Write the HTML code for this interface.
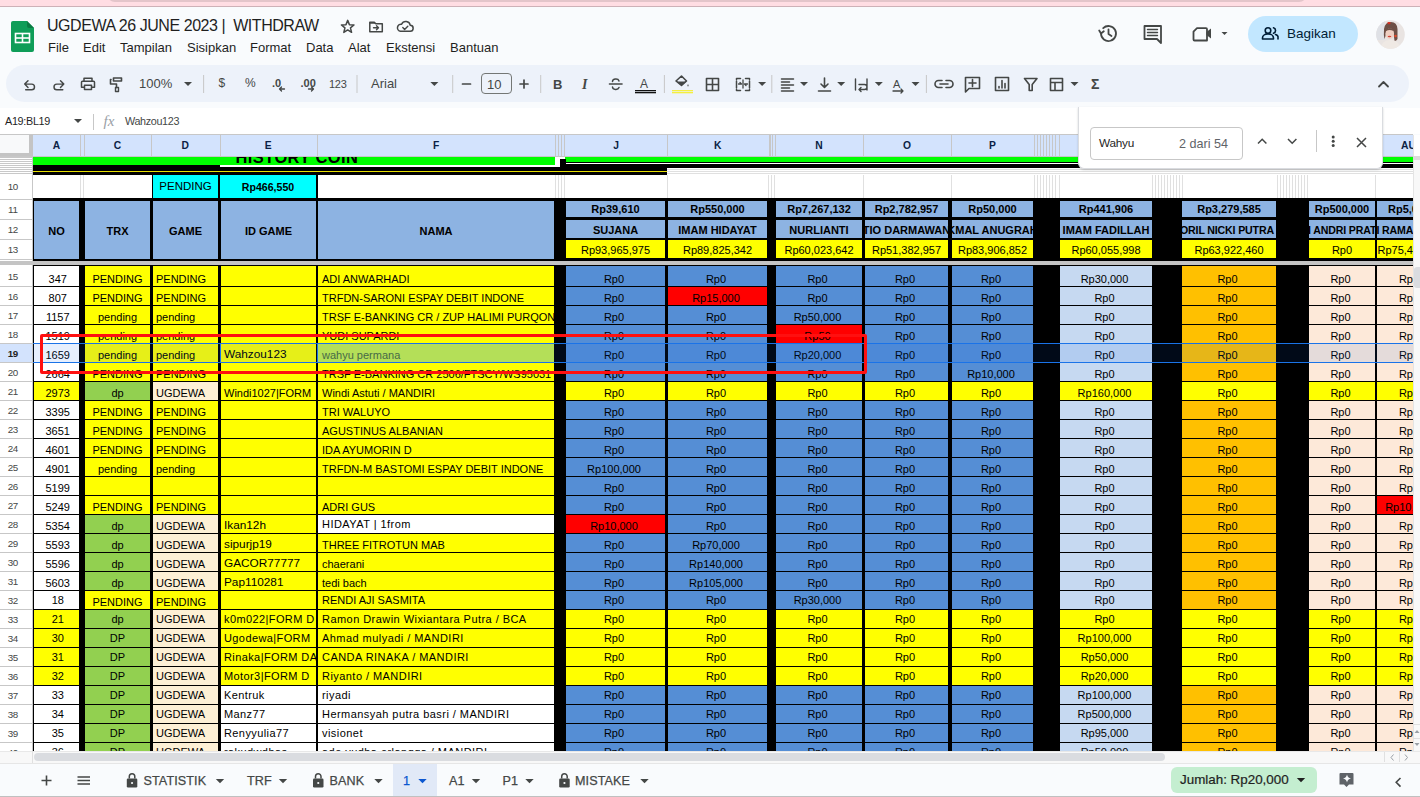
<!DOCTYPE html><html><head><meta charset="utf-8"><style>
*{box-sizing:border-box;margin:0;padding:0}
html,body{width:1420px;height:797px;overflow:hidden;background:#f9fbfd;font-family:"Liberation Sans",sans-serif;position:relative}
.a{position:absolute}
.t{position:absolute;white-space:nowrap;line-height:1}
</style></head><body>
<div class="a" style="left:0;top:0;width:1420px;height:6px;background:#ffdde3"></div>
<div class="a" style="left:107px;top:-8px;width:1200px;height:10px;background:#e3c5ca;border-radius:0 0 8px 8px"></div>
<div class="a" style="left:0;top:6px;width:1420px;height:1px;background:#cdb1b7"></div>
<svg class="a" style="left:11px;top:21px" width="23" height="31" viewBox="0 0 23 31">
<path d="M2 0 H16 L23 7 V29 a2 2 0 0 1 -2 2 H2 a2 2 0 0 1 -2 -2 V2 a2 2 0 0 1 2 -2z" fill="#0f9d58"/>
<path d="M16 0 L23 7 H18 a2 2 0 0 1 -2 -2z" fill="#0b7a43"/>
<rect x="4.5" y="12.5" width="14" height="9" fill="none" stroke="#fff" stroke-width="1.6"/>
<line x1="4.5" y1="17" x2="18.5" y2="17" stroke="#fff" stroke-width="1.6"/>
<line x1="11.5" y1="12.5" x2="11.5" y2="21.5" stroke="#fff" stroke-width="1.6"/>
</svg>
<div class="t" style="left:47px;top:18px;font-size:16px;color:#1f1f1f;letter-spacing:-0.45px">UGDEWA 26 JUNE 2023 |&nbsp; WITHDRAW</div>
<div class="t" style="left:48px;top:41px;font-size:13px;color:#1f1f1f">File</div>
<div class="t" style="left:83px;top:41px;font-size:13px;color:#1f1f1f">Edit</div>
<div class="t" style="left:120px;top:41px;font-size:13px;color:#1f1f1f">Tampilan</div>
<div class="t" style="left:187px;top:41px;font-size:13px;color:#1f1f1f">Sisipkan</div>
<div class="t" style="left:250px;top:41px;font-size:13px;color:#1f1f1f">Format</div>
<div class="t" style="left:306px;top:41px;font-size:13px;color:#1f1f1f">Data</div>
<div class="t" style="left:348px;top:41px;font-size:13px;color:#1f1f1f">Alat</div>
<div class="t" style="left:386px;top:41px;font-size:13px;color:#1f1f1f">Ekstensi</div>
<div class="t" style="left:450px;top:41px;font-size:13px;color:#1f1f1f">Bantuan</div>
<div class="a" style="left:6px;top:65px;width:1403px;height:37px;background:#edf2fa;border-radius:19px"></div>
<div class="a" style="left:0;top:108px;width:1420px;height:26px;background:#fff"></div>
<div class="t" style="left:5px;top:115.5px;font-size:10.8px;letter-spacing:-0.3px;color:#1f1f1f">A19:BL19</div>
<div class="a" style="left:93px;top:114px;width:1px;height:16px;background:#c7c7c7"></div>
<div class="t" style="left:125px;top:115.5px;font-size:10.8px;letter-spacing:-0.35px;color:#444746">Wahzou123</div>
<div class="t" style="left:139px;top:77px;font-size:13px;color:#444746">100%</div>
<div class="t" style="left:329px;top:79px;font-size:11px;color:#444746;letter-spacing:-0.3px">123</div>
<div class="t" style="left:371px;top:77px;font-size:13px;color:#444746">Arial</div>
<div class="a" style="left:481px;top:73px;width:31px;height:21px;border:1px solid #747775;border-radius:4px"></div>
<div class="t" style="left:487px;top:78px;font-size:13px;color:#444746">10</div>
<div class="t" style="left:218.5px;top:77px;font-size:12px;color:#444746">$</div>
<div class="t" style="left:245px;top:77px;font-size:12px;color:#444746">%</div>
<div class="a" style="left:1248px;top:16px;width:110px;height:36px;background:#c2e7ff;border-radius:18px"></div>
<div class="t" style="left:1287px;top:27px;font-size:13.5px;color:#001d35">Bagikan</div>
<svg class="a" style="left:1376px;top:19.5px" width="29" height="29" viewBox="0 0 29 29"><defs><clipPath id="av"><circle cx="14.5" cy="14.5" r="14.3"/></clipPath></defs>
<g clip-path="url(#av)"><rect width="29" height="29" fill="#e9e4e2"/><rect x="0" y="0" width="9" height="20" fill="#dfe1e6"/>
<path d="M8 9 q1 -7 7 -7 q6 0 6.5 7 v10 q-1 2 -3 2 l-1 -8 q-2 -4 -6 -3 q-2 1 -2 6 l-1 3 q-1 -4 -0.5 -10z" fill="#6d4f45"/>
<ellipse cx="13.8" cy="13.5" rx="4.2" ry="5.3" fill="#efcfc2"/><path d="M10 9.5 q4 -3 7.5 0 v1.5 q-4 -2 -7.5 0z" fill="#6d4f45"/>
<ellipse cx="13.5" cy="16.5" rx="1.8" ry="0.8" fill="#d0443a"/>
<path d="M11 3 q2 -2 4 0 l-2 1.5z" fill="#d92a1c"/><circle cx="19.5" cy="16" r="1.3" fill="#e24a2a"/>
<path d="M4 29 q2 -9 10 -9 q9 0 11 9z" fill="#efe9e4"/></g></svg>
<svg class="a" style="left:0;top:0" width="1420" height="797"><polygon points="347.70,20.40 349.40,24.65 353.98,24.96 350.46,27.90 351.58,32.34 347.70,29.90 343.82,32.34 344.94,27.90 341.42,24.96 346.00,24.65" fill="none" stroke="#444746" stroke-width="1.5" stroke-linejoin="round"/><path d="M369.8 22.3 h4.5 l1.5 1.5 h6.5 v8 h-12.5z" fill="none" stroke="#444746" stroke-width="1.5" stroke-linecap="round" stroke-linejoin="round"/><path d="M369.8 22.3 h4.5 l1.5 1.5 h-6z" fill="#444746"/><path d="M373.5 27.8 h5 M376.5 25.8 l2 2 l-2 2" fill="none" stroke="#444746" stroke-width="1.4" stroke-linecap="round" stroke-linejoin="round"/><path d="M400.5 31.3 h9.5 a3 3 0 0 0 0.3 -6 a4.6 4.6 0 0 0 -8.7 -1.1 a3.5 3.5 0 0 0 -1.1 7.1z" fill="none" stroke="#444746" stroke-width="1.5" stroke-linecap="round" stroke-linejoin="round"/><path d="M402.8 27.6 l1.8 1.8 l3.2 -3.2" fill="none" stroke="#444746" stroke-width="1.4" stroke-linecap="round" stroke-linejoin="round"/><path d="M1101 33.5 a7.5 7.5 0 1 0 2.2 -5.3" fill="none" stroke="#444746" stroke-width="1.8" stroke-linecap="round" stroke-linejoin="round"/><path d="M1099.2 30.5 l1.8 3 l2.8 -2.2" fill="none" stroke="#444746" stroke-width="1.8" stroke-linecap="round" stroke-linejoin="round"/><path d="M1108.5 29.5 v4.5 l3 2" fill="none" stroke="#444746" stroke-width="1.8" stroke-linecap="round" stroke-linejoin="round"/><path d="M1144.5 26 h16.5 v17 l-4 -4 h-12.5z" fill="none" stroke="#444746" stroke-width="1.8" stroke-linecap="round" stroke-linejoin="round"/><path d="M1147.5 29.5 h10 M1147.5 32.5 h10 M1147.5 35.5 h10" fill="none" stroke="#444746" stroke-width="1.4" stroke-linecap="round" stroke-linejoin="round"/><path d="M1197 28.2 h9 a1 1 0 0 1 1 1 v11.3 h-12.5 a1 1 0 0 1 -1 -1 v-7.8z" fill="none" stroke="#444746" stroke-width="1.8" stroke-linecap="round" stroke-linejoin="round"/><path d="M1206.5 32 l4.5 -3.5 v10 l-4.5 -3.5z" fill="#444746"/><path d="M1221.5 32 h6 l-3 3z" fill="#444746"/><circle cx="1268" cy="30.5" r="2.8" fill="none" stroke="#001d35" stroke-width="1.6"/><path d="M1262.5 39 v-1 a4 3 0 0 1 11 0 v1z" fill="none" stroke="#001d35" stroke-width="1.6" stroke-linecap="round" stroke-linejoin="round"/><path d="M1273.5 27.8 a2.8 2.8 0 0 1 0 5.4 M1275.5 34.5 a3.5 3 0 0 1 2.5 3.5 v1" fill="none" stroke="#001d35" stroke-width="1.6" stroke-linecap="round" stroke-linejoin="round"/><path d="M28 80.8 l-3.3 3.3 l3.3 3.3 M24.7 84.1 h7 a2.8 2.8 0 0 1 0 5.6 h-6" fill="none" stroke="#444746" stroke-width="1.45" stroke-linecap="round" stroke-linejoin="round"/><path d="M60.5 80.8 l3.3 3.3 l-3.3 3.3 M63.8 84.1 h-7 a2.8 2.8 0 0 0 0 5.6 h6" fill="none" stroke="#444746" stroke-width="1.45" stroke-linecap="round" stroke-linejoin="round"/><path d="M84 81 v-2.8 h8 v2.8 M82.5 81.3 h11 a1 1 0 0 1 1 1 v5 h-2.8 M83.8 87.3 h-2.3 v-5 a1 1 0 0 1 1 -1" fill="none" stroke="#444746" stroke-width="1.5" stroke-linecap="round" stroke-linejoin="round"/><path d="M84.5 85.3 h7 v4.3 h-7z" fill="none" stroke="#444746" stroke-width="1.5" stroke-linecap="round" stroke-linejoin="round"/><path d="M113.5 78 h8 v3 h-8z M111 79.5 h-0.5 v4.5 h6 v3.5" fill="none" stroke="#444746" stroke-width="1.6" stroke-linecap="round" stroke-linejoin="round"/><path d="M115.5 87.5 h3 v4 h-3z" fill="none" stroke="#444746" stroke-width="1.4" stroke-linecap="round" stroke-linejoin="round"/><path d="M184 82 h8 l-4 4z" fill="#444746"/><path d="M430.4 82 h8 l-4 4z" fill="#444746"/><path d="M758.1 82 h8 l-4 4z" fill="#444746"/><path d="M800 82 h8 l-4 4z" fill="#444746"/><path d="M837.2 82 h8 l-4 4z" fill="#444746"/><path d="M874.8 82 h8 l-4 4z" fill="#444746"/><path d="M911.5 82 h8 l-4 4z" fill="#444746"/><path d="M1070.5 82 h8 l-4 4z" fill="#444746"/><rect x="203.1" y="75" width="1" height="18" fill="#c7c7c7"/><rect x="356.5" y="75" width="1" height="18" fill="#c7c7c7"/><rect x="452.2" y="75" width="1" height="18" fill="#c7c7c7"/><rect x="540.2" y="75" width="1" height="18" fill="#c7c7c7"/><rect x="663.9" y="75" width="1" height="18" fill="#c7c7c7"/><rect x="771.3" y="75" width="1" height="18" fill="#c7c7c7"/><rect x="925.9" y="75" width="1" height="18" fill="#c7c7c7"/><text x="272" y="86.5" font-size="11" font-family="Liberation Sans" fill="#444746" font-weight="bold">.0</text><path d="M284.5 89 h-5 M281.5 87 l-2 2 l2 2" fill="none" stroke="#444746" stroke-width="1.3" stroke-linecap="round" stroke-linejoin="round"/><text x="300.5" y="86.5" font-size="11" font-family="Liberation Sans" fill="#444746" font-weight="bold">.00</text><path d="M308.5 89 h5 M311.5 87 l2 2 l-2 2" fill="none" stroke="#444746" stroke-width="1.3" stroke-linecap="round" stroke-linejoin="round"/><path d="M462.5 84 h8" fill="none" stroke="#444746" stroke-width="1.7" stroke-linecap="round" stroke-linejoin="round"/><path d="M520 84 h8 M524 80 v8" fill="none" stroke="#444746" stroke-width="1.7" stroke-linecap="round" stroke-linejoin="round"/><text x="553" y="89" font-size="13" font-family="Liberation Sans" font-weight="bold" fill="#444746">B</text><text x="582" y="89" font-size="14" font-family="Liberation Serif" font-style="italic" font-weight="bold" fill="#444746">I</text><path d="M609.5 84 h12.5" fill="none" stroke="#444746" stroke-width="1.6" stroke-linecap="round" stroke-linejoin="round"/><path d="M612.5 81.5 a3.3 2.5 0 0 1 6.5 -0.5 M612.5 87 a3.3 2.5 0 0 0 6.5 0.5" fill="none" stroke="#444746" stroke-width="1.5" stroke-linecap="round" stroke-linejoin="round"/><text x="640" y="88" font-size="12" font-family="Liberation Sans" fill="#444746">A</text><rect x="635" y="90" width="21" height="1.3" fill="#111"/><rect x="635" y="92" width="21" height="1.3" fill="#111"/><path d="M676 81 l5.5 -5 l5 5 l-5 4.5z" fill="none" stroke="#444746" stroke-width="1.6" stroke-linecap="round" stroke-linejoin="round"/><path d="M676.5 81.5 h10 l-5 4z" fill="#444746"/><path d="M688 84 q1.3 1.6 0 2.8 q-1.3 -1.2 0 -2.8z" fill="#444746"/><rect x="672" y="90" width="21" height="1.3" fill="#f5ef40"/><rect x="672" y="92" width="21" height="1.3" fill="#f5ef40"/><path d="M706.5 78.5 h12 v12 h-12z M712.5 78.5 v12 M706.5 84.5 h12" fill="none" stroke="#444746" stroke-width="1.6" stroke-linecap="round" stroke-linejoin="round"/><path d="M736.5 79.5 v-1 h4 M736.5 89.5 v1 h4 M749.5 79.5 v-1 h-4 M749.5 89.5 v1 h-4 M736.5 81 v7 M749.5 81 v7" fill="none" stroke="#444746" stroke-width="1.5" stroke-linecap="round" stroke-linejoin="round"/><path d="M738.5 84 h3 l-1.5 -1.5 M747.5 84 h-3 l1.5 1.5 M743 80 v8" fill="none" stroke="#444746" stroke-width="1.3" stroke-linecap="round" stroke-linejoin="round"/><path d="M781.5 79 h12 M781.5 82 h8 M781.5 85 h12 M781.5 88 h8 M781.5 91 h12" fill="none" stroke="#444746" stroke-width="1.5" stroke-linecap="round" stroke-linejoin="round"/><path d="M824.5 78 v9 M821 84 l3.5 3.5 l3.5 -3.5 M818.5 91 h12" fill="none" stroke="#444746" stroke-width="1.6" stroke-linecap="round" stroke-linejoin="round"/><path d="M855.5 79 v11 M867 79 v11 M859 84.5 h5.5 a2.5 2.5 0 0 1 0 5 h-5 M861 87.5 l-2 2 l2 2" fill="none" stroke="#444746" stroke-width="1.4" stroke-linecap="round" stroke-linejoin="round"/><text x="893" y="88" font-size="11" font-family="Liberation Sans" fill="#444746">A</text><path d="M893 91 h10 M901 89 l2 2 l-2 2" fill="none" stroke="#444746" stroke-width="1.3" stroke-linecap="round" stroke-linejoin="round"/><path d="M942 80.5 h-3.5 a3.5 3.5 0 0 0 0 7 h3.5 M946 80.5 h3.5 a3.5 3.5 0 0 1 0 7 h-3.5 M940 84 h8" fill="none" stroke="#444746" stroke-width="1.6" stroke-linecap="round" stroke-linejoin="round"/><path d="M965.5 77.5 h14 v11 h-10.5 l-3.5 3.5z M972.5 79.5 v7 M969 83 h7" fill="none" stroke="#444746" stroke-width="1.6" stroke-linecap="round" stroke-linejoin="round"/><path d="M995.5 77.5 h13 v13 h-13z M999 86.5 v1.5 M1002 80.5 v7.5 M1005 83.5 v4.5" fill="none" stroke="#444746" stroke-width="1.6" stroke-linecap="round" stroke-linejoin="round"/><path d="M1024.5 78.5 h12.5 l-4.8 6 v6 h-3 v-6z" fill="none" stroke="#444746" stroke-width="1.6" stroke-linecap="round" stroke-linejoin="round"/><path d="M1050.5 78.5 h12 v12 h-12z M1050.5 82.5 h12 M1055 82.5 v8" fill="none" stroke="#444746" stroke-width="1.6" stroke-linecap="round" stroke-linejoin="round"/><text x="1091" y="89" font-size="14" font-family="Liberation Sans" fill="#444746" font-weight="bold">&#931;</text><path d="M1379 86.5 l4.5 -4.5 l4.5 4.5" fill="none" stroke="#444746" stroke-width="1.8" stroke-linecap="round" stroke-linejoin="round"/><path d="M74 119 h8 l-4 4z" fill="#444746"/><text x="103.5" y="126" font-size="15" font-family="Liberation Serif" font-style="italic" fill="#9aa0a6">fx</text></svg>
<div class="a" style="left:0;top:0;width:1413px;height:751px;overflow:hidden">
<div class="a" style="left:0;top:134px;width:1420px;height:1px;background:#c7c7c7"></div>
<div class="a" style="left:0;top:135px;width:1420px;height:616px;background:#fff"></div>
<div class="a" style="left:33px;top:135px;width:1387px;height:21.5px;background:#d3e3fd"></div>
<div class="a" style="left:0;top:135px;width:29px;height:18px;background:#f8f9fa"></div>
<div class="a" style="left:29px;top:135px;width:4px;height:21.5px;background:#c4c4c4"></div>
<div class="a" style="left:0;top:153px;width:33px;height:3.5px;background:#c4c4c4"></div>
<div class="a" style="left:0;top:156px;width:1420px;height:1px;background:#c7c7c7"></div>
<div class="a" style="left:33px;top:134.5px;width:47px;height:21px;display:flex;align-items:center;justify-content:center;font-size:10.3px;font-weight:bold;color:#0b1f45">A</div>
<div class="a" style="left:84px;top:134.5px;width:67px;height:21px;display:flex;align-items:center;justify-content:center;font-size:10.3px;font-weight:bold;color:#0b1f45">C</div>
<div class="a" style="left:151px;top:134.5px;width:68.5px;height:21px;display:flex;align-items:center;justify-content:center;font-size:10.3px;font-weight:bold;color:#0b1f45">D</div>
<div class="a" style="left:219.5px;top:134.5px;width:97.5px;height:21px;display:flex;align-items:center;justify-content:center;font-size:10.3px;font-weight:bold;color:#0b1f45">E</div>
<div class="a" style="left:317px;top:134.5px;width:238.5px;height:21px;display:flex;align-items:center;justify-content:center;font-size:10.3px;font-weight:bold;color:#0b1f45">F</div>
<div class="a" style="left:565px;top:134.5px;width:102px;height:21px;display:flex;align-items:center;justify-content:center;font-size:10.3px;font-weight:bold;color:#0b1f45">J</div>
<div class="a" style="left:667px;top:134.5px;width:101.5px;height:21px;display:flex;align-items:center;justify-content:center;font-size:10.3px;font-weight:bold;color:#0b1f45">K</div>
<div class="a" style="left:774.5px;top:134.5px;width:88.89999999999998px;height:21px;display:flex;align-items:center;justify-content:center;font-size:10.3px;font-weight:bold;color:#0b1f45">N</div>
<div class="a" style="left:863.4px;top:134.5px;width:87.30000000000007px;height:21px;display:flex;align-items:center;justify-content:center;font-size:10.3px;font-weight:bold;color:#0b1f45">O</div>
<div class="a" style="left:950.7px;top:134.5px;width:83.70000000000005px;height:21px;display:flex;align-items:center;justify-content:center;font-size:10.3px;font-weight:bold;color:#0b1f45">P</div>
<div class="a" style="left:1059px;top:134.5px;width:93px;height:21px;display:flex;align-items:center;justify-content:center;font-size:10.3px;font-weight:bold;color:#0b1f45"></div>
<div class="a" style="left:1182px;top:134.5px;width:94px;height:21px;display:flex;align-items:center;justify-content:center;font-size:10.3px;font-weight:bold;color:#0b1f45"></div>
<div class="a" style="left:1308px;top:134.5px;width:67px;height:21px;display:flex;align-items:center;justify-content:center;font-size:10.3px;font-weight:bold;color:#0b1f45"></div>
<div class="a" style="left:1377px;top:134.5px;width:63px;height:21px;display:flex;align-items:center;justify-content:center;font-size:10.3px;font-weight:bold;color:#0b1f45">AU</div>
<div class="a" style="left:80px;top:135px;width:1px;height:21px;background:#c7c7c7"></div>
<div class="a" style="left:84px;top:135px;width:1px;height:21px;background:#c7c7c7"></div>
<div class="a" style="left:151px;top:135px;width:1px;height:21px;background:#c7c7c7"></div>
<div class="a" style="left:219.5px;top:135px;width:1px;height:21px;background:#c7c7c7"></div>
<div class="a" style="left:317px;top:135px;width:1px;height:21px;background:#c7c7c7"></div>
<div class="a" style="left:555px;top:135px;width:1px;height:21px;background:#c7c7c7"></div>
<div class="a" style="left:558px;top:135px;width:1px;height:21px;background:#c7c7c7"></div>
<div class="a" style="left:561px;top:135px;width:1px;height:21px;background:#c7c7c7"></div>
<div class="a" style="left:564px;top:135px;width:1px;height:21px;background:#c7c7c7"></div>
<div class="a" style="left:667px;top:135px;width:1px;height:21px;background:#c7c7c7"></div>
<div class="a" style="left:768.5px;top:135px;width:1px;height:21px;background:#c7c7c7"></div>
<div class="a" style="left:770px;top:135px;width:1px;height:21px;background:#c7c7c7"></div>
<div class="a" style="left:772px;top:135px;width:1px;height:21px;background:#c7c7c7"></div>
<div class="a" style="left:774.5px;top:135px;width:1px;height:21px;background:#c7c7c7"></div>
<div class="a" style="left:863.4px;top:135px;width:1px;height:21px;background:#c7c7c7"></div>
<div class="a" style="left:950.7px;top:135px;width:1px;height:21px;background:#c7c7c7"></div>
<div class="a" style="left:1034px;top:135px;width:1px;height:21px;background:#c7c7c7"></div>
<div class="a" style="left:1037px;top:135px;width:1px;height:21px;background:#c7c7c7"></div>
<div class="a" style="left:1040px;top:135px;width:1px;height:21px;background:#c7c7c7"></div>
<div class="a" style="left:1043px;top:135px;width:1px;height:21px;background:#c7c7c7"></div>
<div class="a" style="left:1046px;top:135px;width:1px;height:21px;background:#c7c7c7"></div>
<div class="a" style="left:1049px;top:135px;width:1px;height:21px;background:#c7c7c7"></div>
<div class="a" style="left:1052px;top:135px;width:1px;height:21px;background:#c7c7c7"></div>
<div class="a" style="left:1055px;top:135px;width:1px;height:21px;background:#c7c7c7"></div>
<div class="a" style="left:1059px;top:135px;width:1px;height:21px;background:#c7c7c7"></div>
<div class="a" style="left:1152px;top:135px;width:1px;height:21px;background:#c7c7c7"></div>
<div class="a" style="left:1155px;top:135px;width:1px;height:21px;background:#c7c7c7"></div>
<div class="a" style="left:1158px;top:135px;width:1px;height:21px;background:#c7c7c7"></div>
<div class="a" style="left:1161px;top:135px;width:1px;height:21px;background:#c7c7c7"></div>
<div class="a" style="left:1164px;top:135px;width:1px;height:21px;background:#c7c7c7"></div>
<div class="a" style="left:1167px;top:135px;width:1px;height:21px;background:#c7c7c7"></div>
<div class="a" style="left:1170px;top:135px;width:1px;height:21px;background:#c7c7c7"></div>
<div class="a" style="left:1173px;top:135px;width:1px;height:21px;background:#c7c7c7"></div>
<div class="a" style="left:1176px;top:135px;width:1px;height:21px;background:#c7c7c7"></div>
<div class="a" style="left:1179px;top:135px;width:1px;height:21px;background:#c7c7c7"></div>
<div class="a" style="left:1182px;top:135px;width:1px;height:21px;background:#c7c7c7"></div>
<div class="a" style="left:1276px;top:135px;width:1px;height:21px;background:#c7c7c7"></div>
<div class="a" style="left:1279px;top:135px;width:1px;height:21px;background:#c7c7c7"></div>
<div class="a" style="left:1282px;top:135px;width:1px;height:21px;background:#c7c7c7"></div>
<div class="a" style="left:1285px;top:135px;width:1px;height:21px;background:#c7c7c7"></div>
<div class="a" style="left:1288px;top:135px;width:1px;height:21px;background:#c7c7c7"></div>
<div class="a" style="left:1291px;top:135px;width:1px;height:21px;background:#c7c7c7"></div>
<div class="a" style="left:1294px;top:135px;width:1px;height:21px;background:#c7c7c7"></div>
<div class="a" style="left:1297px;top:135px;width:1px;height:21px;background:#c7c7c7"></div>
<div class="a" style="left:1300px;top:135px;width:1px;height:21px;background:#c7c7c7"></div>
<div class="a" style="left:1303px;top:135px;width:1px;height:21px;background:#c7c7c7"></div>
<div class="a" style="left:1306px;top:135px;width:1px;height:21px;background:#c7c7c7"></div>
<div class="a" style="left:1308px;top:135px;width:1px;height:21px;background:#c7c7c7"></div>
<div class="a" style="left:1375px;top:135px;width:1px;height:21px;background:#c7c7c7"></div>
<div class="a" style="left:32px;top:156px;width:1px;height:595px;background:#c7c7c7"></div>
<div class="a" style="left:0;top:157px;width:32px;height:1px;background:#c8c8c8"></div>
<div class="a" style="left:0;top:159px;width:32px;height:1px;background:#c8c8c8"></div>
<div class="a" style="left:0;top:161px;width:32px;height:1px;background:#c8c8c8"></div>
<div class="a" style="left:0;top:163px;width:32px;height:1px;background:#c8c8c8"></div>
<div class="a" style="left:0;top:165px;width:32px;height:1px;background:#c8c8c8"></div>
<div class="a" style="left:0;top:167px;width:32px;height:1px;background:#c8c8c8"></div>
<div class="a" style="left:0;top:169px;width:32px;height:1px;background:#c8c8c8"></div>
<div class="a" style="left:0;top:171px;width:32px;height:1px;background:#c8c8c8"></div>
<div class="a" style="left:0;top:173px;width:32px;height:1px;background:#c8c8c8"></div>
<div class="a" style="left:0;top:174px;width:32px;height:25.5px;background:transparent;border-bottom:1px solid #c7c7c7"></div>
<div class="a" style="left:0;top:174px;width:25.6px;height:25.5px;display:flex;align-items:center;justify-content:center;font-size:9.8px;letter-spacing:-0.4px;font-weight:normal;color:#444746">10</div>
<div class="a" style="left:0;top:199.5px;width:32px;height:20.0px;background:transparent;border-bottom:1px solid #c7c7c7"></div>
<div class="a" style="left:0;top:199.5px;width:25.6px;height:20.0px;display:flex;align-items:center;justify-content:center;font-size:9.8px;letter-spacing:-0.4px;font-weight:normal;color:#444746">11</div>
<div class="a" style="left:0;top:219.5px;width:32px;height:20.0px;background:transparent;border-bottom:1px solid #c7c7c7"></div>
<div class="a" style="left:0;top:219.5px;width:25.6px;height:20.0px;display:flex;align-items:center;justify-content:center;font-size:9.8px;letter-spacing:-0.4px;font-weight:normal;color:#444746">12</div>
<div class="a" style="left:0;top:239.5px;width:32px;height:20.0px;background:transparent;border-bottom:1px solid #c7c7c7"></div>
<div class="a" style="left:0;top:239.5px;width:25.6px;height:20.0px;display:flex;align-items:center;justify-content:center;font-size:9.8px;letter-spacing:-0.4px;font-weight:normal;color:#444746">13</div>
<div class="a" style="left:0;top:266px;width:32px;height:21px;background:transparent;border-bottom:1px solid #c7c7c7"></div>
<div class="a" style="left:0;top:266px;width:25.6px;height:21px;display:flex;align-items:center;justify-content:center;font-size:9.8px;letter-spacing:-0.4px;font-weight:normal;color:#444746">15</div>
<div class="a" style="left:0;top:287px;width:32px;height:19px;background:transparent;border-bottom:1px solid #c7c7c7"></div>
<div class="a" style="left:0;top:287px;width:25.6px;height:19px;display:flex;align-items:center;justify-content:center;font-size:9.8px;letter-spacing:-0.4px;font-weight:normal;color:#444746">16</div>
<div class="a" style="left:0;top:306px;width:32px;height:19px;background:transparent;border-bottom:1px solid #c7c7c7"></div>
<div class="a" style="left:0;top:306px;width:25.6px;height:19px;display:flex;align-items:center;justify-content:center;font-size:9.8px;letter-spacing:-0.4px;font-weight:normal;color:#444746">17</div>
<div class="a" style="left:0;top:325px;width:32px;height:19px;background:transparent;border-bottom:1px solid #c7c7c7"></div>
<div class="a" style="left:0;top:325px;width:25.6px;height:19px;display:flex;align-items:center;justify-content:center;font-size:9.8px;letter-spacing:-0.4px;font-weight:normal;color:#444746">18</div>
<div class="a" style="left:0;top:344px;width:32px;height:19px;background:#d3e3fd;border-bottom:1px solid #c7c7c7"></div>
<div class="a" style="left:0;top:344px;width:25.6px;height:19px;display:flex;align-items:center;justify-content:center;font-size:9.8px;letter-spacing:-0.4px;font-weight:bold;color:#1f1f1f">19</div>
<div class="a" style="left:0;top:363px;width:32px;height:19px;background:transparent;border-bottom:1px solid #c7c7c7"></div>
<div class="a" style="left:0;top:363px;width:25.6px;height:19px;display:flex;align-items:center;justify-content:center;font-size:9.8px;letter-spacing:-0.4px;font-weight:normal;color:#444746">20</div>
<div class="a" style="left:0;top:382px;width:32px;height:19px;background:transparent;border-bottom:1px solid #c7c7c7"></div>
<div class="a" style="left:0;top:382px;width:25.6px;height:19px;display:flex;align-items:center;justify-content:center;font-size:9.8px;letter-spacing:-0.4px;font-weight:normal;color:#444746">21</div>
<div class="a" style="left:0;top:401px;width:32px;height:19px;background:transparent;border-bottom:1px solid #c7c7c7"></div>
<div class="a" style="left:0;top:401px;width:25.6px;height:19px;display:flex;align-items:center;justify-content:center;font-size:9.8px;letter-spacing:-0.4px;font-weight:normal;color:#444746">22</div>
<div class="a" style="left:0;top:420px;width:32px;height:19px;background:transparent;border-bottom:1px solid #c7c7c7"></div>
<div class="a" style="left:0;top:420px;width:25.6px;height:19px;display:flex;align-items:center;justify-content:center;font-size:9.8px;letter-spacing:-0.4px;font-weight:normal;color:#444746">23</div>
<div class="a" style="left:0;top:439px;width:32px;height:19px;background:transparent;border-bottom:1px solid #c7c7c7"></div>
<div class="a" style="left:0;top:439px;width:25.6px;height:19px;display:flex;align-items:center;justify-content:center;font-size:9.8px;letter-spacing:-0.4px;font-weight:normal;color:#444746">24</div>
<div class="a" style="left:0;top:458px;width:32px;height:19px;background:transparent;border-bottom:1px solid #c7c7c7"></div>
<div class="a" style="left:0;top:458px;width:25.6px;height:19px;display:flex;align-items:center;justify-content:center;font-size:9.8px;letter-spacing:-0.4px;font-weight:normal;color:#444746">25</div>
<div class="a" style="left:0;top:477px;width:32px;height:19px;background:transparent;border-bottom:1px solid #c7c7c7"></div>
<div class="a" style="left:0;top:477px;width:25.6px;height:19px;display:flex;align-items:center;justify-content:center;font-size:9.8px;letter-spacing:-0.4px;font-weight:normal;color:#444746">26</div>
<div class="a" style="left:0;top:496px;width:32px;height:19px;background:transparent;border-bottom:1px solid #c7c7c7"></div>
<div class="a" style="left:0;top:496px;width:25.6px;height:19px;display:flex;align-items:center;justify-content:center;font-size:9.8px;letter-spacing:-0.4px;font-weight:normal;color:#444746">27</div>
<div class="a" style="left:0;top:515px;width:32px;height:19px;background:transparent;border-bottom:1px solid #c7c7c7"></div>
<div class="a" style="left:0;top:515px;width:25.6px;height:19px;display:flex;align-items:center;justify-content:center;font-size:9.8px;letter-spacing:-0.4px;font-weight:normal;color:#444746">28</div>
<div class="a" style="left:0;top:534px;width:32px;height:19px;background:transparent;border-bottom:1px solid #c7c7c7"></div>
<div class="a" style="left:0;top:534px;width:25.6px;height:19px;display:flex;align-items:center;justify-content:center;font-size:9.8px;letter-spacing:-0.4px;font-weight:normal;color:#444746">29</div>
<div class="a" style="left:0;top:553px;width:32px;height:19px;background:transparent;border-bottom:1px solid #c7c7c7"></div>
<div class="a" style="left:0;top:553px;width:25.6px;height:19px;display:flex;align-items:center;justify-content:center;font-size:9.8px;letter-spacing:-0.4px;font-weight:normal;color:#444746">30</div>
<div class="a" style="left:0;top:572px;width:32px;height:19px;background:transparent;border-bottom:1px solid #c7c7c7"></div>
<div class="a" style="left:0;top:572px;width:25.6px;height:19px;display:flex;align-items:center;justify-content:center;font-size:9.8px;letter-spacing:-0.4px;font-weight:normal;color:#444746">31</div>
<div class="a" style="left:0;top:591px;width:32px;height:19px;background:transparent;border-bottom:1px solid #c7c7c7"></div>
<div class="a" style="left:0;top:591px;width:25.6px;height:19px;display:flex;align-items:center;justify-content:center;font-size:9.8px;letter-spacing:-0.4px;font-weight:normal;color:#444746">32</div>
<div class="a" style="left:0;top:610px;width:32px;height:19px;background:transparent;border-bottom:1px solid #c7c7c7"></div>
<div class="a" style="left:0;top:610px;width:25.6px;height:19px;display:flex;align-items:center;justify-content:center;font-size:9.8px;letter-spacing:-0.4px;font-weight:normal;color:#444746">33</div>
<div class="a" style="left:0;top:629px;width:32px;height:19px;background:transparent;border-bottom:1px solid #c7c7c7"></div>
<div class="a" style="left:0;top:629px;width:25.6px;height:19px;display:flex;align-items:center;justify-content:center;font-size:9.8px;letter-spacing:-0.4px;font-weight:normal;color:#444746">34</div>
<div class="a" style="left:0;top:648px;width:32px;height:19px;background:transparent;border-bottom:1px solid #c7c7c7"></div>
<div class="a" style="left:0;top:648px;width:25.6px;height:19px;display:flex;align-items:center;justify-content:center;font-size:9.8px;letter-spacing:-0.4px;font-weight:normal;color:#444746">35</div>
<div class="a" style="left:0;top:667px;width:32px;height:19px;background:transparent;border-bottom:1px solid #c7c7c7"></div>
<div class="a" style="left:0;top:667px;width:25.6px;height:19px;display:flex;align-items:center;justify-content:center;font-size:9.8px;letter-spacing:-0.4px;font-weight:normal;color:#444746">36</div>
<div class="a" style="left:0;top:686px;width:32px;height:19px;background:transparent;border-bottom:1px solid #c7c7c7"></div>
<div class="a" style="left:0;top:686px;width:25.6px;height:19px;display:flex;align-items:center;justify-content:center;font-size:9.8px;letter-spacing:-0.4px;font-weight:normal;color:#444746">37</div>
<div class="a" style="left:0;top:705px;width:32px;height:19px;background:transparent;border-bottom:1px solid #c7c7c7"></div>
<div class="a" style="left:0;top:705px;width:25.6px;height:19px;display:flex;align-items:center;justify-content:center;font-size:9.8px;letter-spacing:-0.4px;font-weight:normal;color:#444746">38</div>
<div class="a" style="left:0;top:724px;width:32px;height:19px;background:transparent;border-bottom:1px solid #c7c7c7"></div>
<div class="a" style="left:0;top:724px;width:25.6px;height:19px;display:flex;align-items:center;justify-content:center;font-size:9.8px;letter-spacing:-0.4px;font-weight:normal;color:#444746">39</div>
<div class="a" style="left:0;top:743px;width:32px;height:19px;background:transparent;border-bottom:1px solid #c7c7c7"></div>
<div class="a" style="left:0;top:743px;width:25.6px;height:19px;display:flex;align-items:center;justify-content:center;font-size:9.8px;letter-spacing:-0.4px;font-weight:normal;color:#444746">40</div>
<div class="a" style="left:33px;top:156.5px;width:522px;height:8.5px;background:#00ff00;overflow:hidden"><div class="t" style="left:202.5px;top:-8px;font-size:16.5px;font-weight:bold;color:#000;letter-spacing:0.4px">HISTORY COIN</div></div>
<div class="a" style="left:33px;top:165px;width:522px;height:10px;background:#000"></div>
<div class="a" style="left:220px;top:165px;width:335px;height:1.5px;background:#fff"></div>
<div class="a" style="left:33px;top:171px;width:522px;height:1px;background:#e8e000"></div>
<div class="a" style="left:565px;top:157px;width:848px;height:5px;background:#00ff00"></div>
<div class="a" style="left:555px;top:157px;width:5px;height:10px;background:#fff"></div>
<div class="a" style="left:560px;top:159px;width:6px;height:16px;background:#000"></div>
<div class="a" style="left:565px;top:162px;width:848px;height:1px;background:#000"></div>
<div class="a" style="left:565px;top:164px;width:848px;height:4px;background:#000"></div>
<div class="a" style="left:555px;top:167px;width:112px;height:8px;background:#000"></div>
<div class="a" style="left:555px;top:171px;width:112px;height:1px;background:#e8e000"></div>
<div class="a" style="left:667px;top:169px;width:746px;height:1px;background:#e0e0e0"></div>
<div class="a" style="left:667px;top:171px;width:746px;height:1px;background:#e0e0e0"></div>
<div class="a" style="left:667px;top:173px;width:746px;height:1px;background:#e0e0e0"></div>
<div class="a" style="left:153px;top:175px;width:65px;height:23px;background:#00ffff;overflow:hidden;display:flex;align-items:flex-end;justify-content:center;padding-bottom:5.5px;"><span style="font-size:11.5px;line-height:1;white-space:nowrap;color:#000;">PENDING</span></div>
<div class="a" style="left:220px;top:175px;width:96px;height:23px;background:#00ffff;overflow:hidden;display:flex;align-items:flex-end;justify-content:center;padding-bottom:5.5px;"><span style="font-size:10.6px;line-height:1;white-space:nowrap;color:#000;font-weight:bold;">Rp466,550</span></div>
<div class="a" style="left:218px;top:175px;width:2px;height:23px;background:#000"></div>
<div class="a" style="left:316px;top:175px;width:2px;height:23px;background:#000"></div>
<div class="a" style="left:152px;top:175px;width:1px;height:23px;background:#000"></div>
<div class="a" style="left:80px;top:175px;width:1px;height:23px;background:#e0e0e0"></div>
<div class="a" style="left:83px;top:175px;width:1px;height:23px;background:#e0e0e0"></div>
<div class="a" style="left:555px;top:175px;width:1px;height:23px;background:#e0e0e0"></div>
<div class="a" style="left:558px;top:175px;width:1px;height:23px;background:#e0e0e0"></div>
<div class="a" style="left:561px;top:175px;width:1px;height:23px;background:#e0e0e0"></div>
<div class="a" style="left:564px;top:175px;width:1px;height:23px;background:#e0e0e0"></div>
<div class="a" style="left:667px;top:175px;width:1px;height:23px;background:#e0e0e0"></div>
<div class="a" style="left:768px;top:175px;width:1px;height:23px;background:#e0e0e0"></div>
<div class="a" style="left:771px;top:175px;width:1px;height:23px;background:#e0e0e0"></div>
<div class="a" style="left:774px;top:175px;width:1px;height:23px;background:#e0e0e0"></div>
<div class="a" style="left:863px;top:175px;width:1px;height:23px;background:#e0e0e0"></div>
<div class="a" style="left:951px;top:175px;width:1px;height:23px;background:#e0e0e0"></div>
<div class="a" style="left:1034px;top:175px;width:1px;height:23px;background:#e0e0e0"></div>
<div class="a" style="left:1037px;top:175px;width:1px;height:23px;background:#e0e0e0"></div>
<div class="a" style="left:1040px;top:175px;width:1px;height:23px;background:#e0e0e0"></div>
<div class="a" style="left:1043px;top:175px;width:1px;height:23px;background:#e0e0e0"></div>
<div class="a" style="left:1046px;top:175px;width:1px;height:23px;background:#e0e0e0"></div>
<div class="a" style="left:1049px;top:175px;width:1px;height:23px;background:#e0e0e0"></div>
<div class="a" style="left:1052px;top:175px;width:1px;height:23px;background:#e0e0e0"></div>
<div class="a" style="left:1055px;top:175px;width:1px;height:23px;background:#e0e0e0"></div>
<div class="a" style="left:1059px;top:175px;width:1px;height:23px;background:#e0e0e0"></div>
<div class="a" style="left:1152px;top:175px;width:1px;height:23px;background:#e0e0e0"></div>
<div class="a" style="left:1155px;top:175px;width:1px;height:23px;background:#e0e0e0"></div>
<div class="a" style="left:1158px;top:175px;width:1px;height:23px;background:#e0e0e0"></div>
<div class="a" style="left:1161px;top:175px;width:1px;height:23px;background:#e0e0e0"></div>
<div class="a" style="left:1164px;top:175px;width:1px;height:23px;background:#e0e0e0"></div>
<div class="a" style="left:1167px;top:175px;width:1px;height:23px;background:#e0e0e0"></div>
<div class="a" style="left:1170px;top:175px;width:1px;height:23px;background:#e0e0e0"></div>
<div class="a" style="left:1173px;top:175px;width:1px;height:23px;background:#e0e0e0"></div>
<div class="a" style="left:1176px;top:175px;width:1px;height:23px;background:#e0e0e0"></div>
<div class="a" style="left:1179px;top:175px;width:1px;height:23px;background:#e0e0e0"></div>
<div class="a" style="left:1182px;top:175px;width:1px;height:23px;background:#e0e0e0"></div>
<div class="a" style="left:1277px;top:175px;width:1px;height:23px;background:#e0e0e0"></div>
<div class="a" style="left:1280px;top:175px;width:1px;height:23px;background:#e0e0e0"></div>
<div class="a" style="left:1283px;top:175px;width:1px;height:23px;background:#e0e0e0"></div>
<div class="a" style="left:1286px;top:175px;width:1px;height:23px;background:#e0e0e0"></div>
<div class="a" style="left:1289px;top:175px;width:1px;height:23px;background:#e0e0e0"></div>
<div class="a" style="left:1292px;top:175px;width:1px;height:23px;background:#e0e0e0"></div>
<div class="a" style="left:1295px;top:175px;width:1px;height:23px;background:#e0e0e0"></div>
<div class="a" style="left:1298px;top:175px;width:1px;height:23px;background:#e0e0e0"></div>
<div class="a" style="left:1301px;top:175px;width:1px;height:23px;background:#e0e0e0"></div>
<div class="a" style="left:1304px;top:175px;width:1px;height:23px;background:#e0e0e0"></div>
<div class="a" style="left:1307px;top:175px;width:1px;height:23px;background:#e0e0e0"></div>
<div class="a" style="left:1375px;top:175px;width:1px;height:23px;background:#e0e0e0"></div>
<div class="a" style="left:33px;top:198px;width:1380px;height:62.5px;background:#000"></div>
<div class="a" style="left:0;top:260.5px;width:1413px;height:4.5px;background:#c4c4c4"></div>
<div class="a" style="left:34px;top:201px;width:45px;height:58px;background:#8db3e2;overflow:hidden;display:flex;align-items:flex-end;justify-content:center;padding-bottom:22px;"><span style="font-size:11px;line-height:1;white-space:nowrap;color:#000;font-weight:bold;">NO</span></div>
<div class="a" style="left:85px;top:201px;width:65px;height:58px;background:#8db3e2;overflow:hidden;display:flex;align-items:flex-end;justify-content:center;padding-bottom:22px;"><span style="font-size:11px;line-height:1;white-space:nowrap;color:#000;font-weight:bold;">TRX</span></div>
<div class="a" style="left:153px;top:201px;width:65px;height:58px;background:#8db3e2;overflow:hidden;display:flex;align-items:flex-end;justify-content:center;padding-bottom:22px;"><span style="font-size:11px;line-height:1;white-space:nowrap;color:#000;font-weight:bold;">GAME</span></div>
<div class="a" style="left:221px;top:201px;width:95px;height:58px;background:#8db3e2;overflow:hidden;display:flex;align-items:flex-end;justify-content:center;padding-bottom:22px;"><span style="font-size:11px;line-height:1;white-space:nowrap;color:#000;font-weight:bold;">ID GAME</span></div>
<div class="a" style="left:318px;top:201px;width:236px;height:58px;background:#8db3e2;overflow:hidden;display:flex;align-items:flex-end;justify-content:center;padding-bottom:22px;"><span style="font-size:11px;line-height:1;white-space:nowrap;color:#000;font-weight:bold;">NAMA</span></div>
<div class="a" style="left:566px;top:201px;width:99px;height:16px;background:#8db3e2;overflow:hidden;display:flex;align-items:flex-end;justify-content:center;padding-bottom:2px;"><span style="font-size:11px;line-height:1;white-space:nowrap;color:#000;font-weight:bold;">Rp39,610</span></div>
<div class="a" style="left:566px;top:220px;width:99px;height:18px;background:#8db3e2;overflow:hidden;display:flex;align-items:flex-end;justify-content:center;padding-bottom:2.5px;"><span style="font-size:11px;line-height:1;white-space:nowrap;color:#000;font-weight:bold;">SUJANA</span></div>
<div class="a" style="left:566px;top:240px;width:99px;height:18px;background:#ffff00;overflow:hidden;display:flex;align-items:flex-end;justify-content:center;padding-bottom:2.5px;"><span style="font-size:11px;line-height:1;white-space:nowrap;color:#000;">Rp93,965,975</span></div>
<div class="a" style="left:668px;top:201px;width:99px;height:16px;background:#8db3e2;overflow:hidden;display:flex;align-items:flex-end;justify-content:center;padding-bottom:2px;"><span style="font-size:11px;line-height:1;white-space:nowrap;color:#000;font-weight:bold;">Rp550,000</span></div>
<div class="a" style="left:668px;top:220px;width:99px;height:18px;background:#8db3e2;overflow:hidden;display:flex;align-items:flex-end;justify-content:center;padding-bottom:2.5px;"><span style="font-size:11px;line-height:1;white-space:nowrap;color:#000;font-weight:bold;">IMAM HIDAYAT</span></div>
<div class="a" style="left:668px;top:240px;width:99px;height:18px;background:#ffff00;overflow:hidden;display:flex;align-items:flex-end;justify-content:center;padding-bottom:2.5px;"><span style="font-size:11px;line-height:1;white-space:nowrap;color:#000;">Rp89,825,342</span></div>
<div class="a" style="left:776px;top:201px;width:86px;height:16px;background:#8db3e2;overflow:hidden;display:flex;align-items:flex-end;justify-content:center;padding-bottom:2px;"><span style="font-size:11px;line-height:1;white-space:nowrap;color:#000;font-weight:bold;">Rp7,267,132</span></div>
<div class="a" style="left:776px;top:220px;width:86px;height:18px;background:#8db3e2;overflow:hidden;display:flex;align-items:flex-end;justify-content:center;padding-bottom:2.5px;"><span style="font-size:11px;line-height:1;white-space:nowrap;color:#000;font-weight:bold;">NURLIANTI</span></div>
<div class="a" style="left:776px;top:240px;width:86px;height:18px;background:#ffff00;overflow:hidden;display:flex;align-items:flex-end;justify-content:center;padding-bottom:2.5px;"><span style="font-size:11px;line-height:1;white-space:nowrap;color:#000;">Rp60,023,642</span></div>
<div class="a" style="left:865px;top:201px;width:83px;height:16px;background:#8db3e2;overflow:hidden;display:flex;align-items:flex-end;justify-content:center;padding-bottom:2px;"><span style="font-size:11px;line-height:1;white-space:nowrap;color:#000;font-weight:bold;">Rp2,782,957</span></div>
<div class="a" style="left:865px;top:220px;width:83px;height:18px;background:#8db3e2;overflow:hidden;display:flex;align-items:flex-end;justify-content:center;padding-bottom:2.5px;"><span style="font-size:11px;line-height:1;white-space:nowrap;color:#000;font-weight:bold;">TIO DARMAWAN</span></div>
<div class="a" style="left:865px;top:240px;width:83px;height:18px;background:#ffff00;overflow:hidden;display:flex;align-items:flex-end;justify-content:center;padding-bottom:2.5px;"><span style="font-size:11px;line-height:1;white-space:nowrap;color:#000;">Rp51,382,957</span></div>
<div class="a" style="left:952px;top:201px;width:81px;height:16px;background:#8db3e2;overflow:hidden;display:flex;align-items:flex-end;justify-content:center;padding-bottom:2px;"><span style="font-size:11px;line-height:1;white-space:nowrap;color:#000;font-weight:bold;">Rp50,000</span></div>
<div class="a" style="left:952px;top:220px;width:81px;height:18px;background:#8db3e2;overflow:hidden;display:flex;align-items:flex-end;justify-content:center;padding-bottom:2.5px;"><span style="font-size:11px;line-height:1;white-space:nowrap;color:#000;font-weight:bold;">KMAL ANUGRAH</span></div>
<div class="a" style="left:952px;top:240px;width:81px;height:18px;background:#ffff00;overflow:hidden;display:flex;align-items:flex-end;justify-content:center;padding-bottom:2.5px;"><span style="font-size:11px;line-height:1;white-space:nowrap;color:#000;">Rp83,906,852</span></div>
<div class="a" style="left:1060px;top:201px;width:92px;height:16px;background:#8db3e2;overflow:hidden;display:flex;align-items:flex-end;justify-content:center;padding-bottom:2px;"><span style="font-size:11px;line-height:1;white-space:nowrap;color:#000;font-weight:bold;">Rp441,906</span></div>
<div class="a" style="left:1060px;top:220px;width:92px;height:18px;background:#8db3e2;overflow:hidden;display:flex;align-items:flex-end;justify-content:center;padding-bottom:2.5px;"><span style="font-size:11px;line-height:1;white-space:nowrap;color:#000;font-weight:bold;">IMAM FADILLAH</span></div>
<div class="a" style="left:1060px;top:240px;width:92px;height:18px;background:#ffff00;overflow:hidden;display:flex;align-items:flex-end;justify-content:center;padding-bottom:2.5px;"><span style="font-size:11px;line-height:1;white-space:nowrap;color:#000;">Rp60,055,998</span></div>
<div class="a" style="left:1182px;top:201px;width:94px;height:16px;background:#8db3e2;overflow:hidden;display:flex;align-items:flex-end;justify-content:center;padding-bottom:2px;"><span style="font-size:11px;line-height:1;white-space:nowrap;color:#000;font-weight:bold;">Rp3,279,585</span></div>
<div class="a" style="left:1182px;top:220px;width:94px;height:18px;background:#8db3e2;overflow:hidden"><div class="t" style="left:-9.5px;bottom:2.5px;font-size:10.6px;font-weight:bold;letter-spacing:-0.15px;color:#000">BORIL NICKI PUTRA</div></div>
<div class="a" style="left:1182px;top:240px;width:94px;height:18px;background:#ffff00;overflow:hidden;display:flex;align-items:flex-end;justify-content:center;padding-bottom:2.5px;"><span style="font-size:11px;line-height:1;white-space:nowrap;color:#000;">Rp63,922,460</span></div>
<div class="a" style="left:1309px;top:201px;width:66px;height:16px;background:#8db3e2;overflow:hidden;display:flex;align-items:flex-end;justify-content:center;padding-bottom:2px;"><span style="font-size:11px;line-height:1;white-space:nowrap;color:#000;font-weight:bold;">Rp500,000</span></div>
<div class="a" style="left:1309px;top:220px;width:66px;height:18px;background:#8db3e2;overflow:hidden"><div class="t" style="left:-8.5px;bottom:2.5px;font-size:10.6px;font-weight:bold;letter-spacing:-0.15px;color:#000">RI ANDRI PRATAMA</div></div>
<div class="a" style="left:1309px;top:240px;width:66px;height:18px;background:#ffff00;overflow:hidden;display:flex;align-items:flex-end;justify-content:center;padding-bottom:2.5px;"><span style="font-size:11px;line-height:1;white-space:nowrap;color:#000;">Rp0</span></div>
<div class="a" style="left:1377px;top:201px;width:67px;height:16px;background:#8db3e2;overflow:hidden"><div class="t" style="left:11px;bottom:2px;font-size:11px;font-weight:bold;letter-spacing:0px;color:#000">Rp5,000</div></div>
<div class="a" style="left:1377px;top:220px;width:67px;height:18px;background:#8db3e2;overflow:hidden"><div class="t" style="left:-8px;bottom:2.5px;font-size:10.6px;font-weight:bold;letter-spacing:-0.15px;color:#000">RI RAMADHAN</div></div>
<div class="a" style="left:1377px;top:240px;width:67px;height:18px;background:#ffff00;overflow:hidden"><div class="t" style="left:0.5px;bottom:2.5px;font-size:11px;letter-spacing:0px;color:#000">Rp75,450,000</div></div>
<div class="a" style="left:33px;top:265px;width:1380px;height:486px;background:#000"></div>
<div class="a" style="left:34px;top:266px;width:45px;height:20px;background:#ffffff;overflow:hidden;display:flex;align-items:flex-end;justify-content:center;padding-bottom:1.5px;padding-left:2.5px;"><span style="font-size:11px;line-height:1;white-space:nowrap;color:#000;">347</span></div>
<div class="a" style="left:85px;top:266px;width:65px;height:20px;background:#ffff00;overflow:hidden;display:flex;align-items:flex-end;justify-content:center;padding-bottom:1.5px;"><span style="font-size:11px;line-height:1;white-space:nowrap;color:#000;">PENDING</span></div>
<div class="a" style="left:153px;top:266px;width:65px;height:20px;background:#ffff00;overflow:hidden;display:flex;align-items:flex-end;justify-content:flex-start;padding-left:3px;padding-bottom:1.5px;"><span style="font-size:11px;line-height:1;white-space:nowrap;color:#000;">PENDING</span></div>
<div class="a" style="left:221px;top:266px;width:95px;height:20px;background:#ffff00;overflow:hidden;display:flex;align-items:flex-end;justify-content:flex-start;padding-left:3px;padding-bottom:1.5px;"></div>
<div class="a" style="left:318px;top:266px;width:236px;height:20px;background:#ffff00;overflow:hidden;display:flex;align-items:flex-end;justify-content:flex-start;padding-left:4px;padding-bottom:1.5px;"><span style="font-size:11px;line-height:1;white-space:nowrap;color:#000;">ADI ANWARHADI</span></div>
<div class="a" style="left:566px;top:266px;width:99px;height:20px;background:#558ed5;overflow:hidden;display:flex;align-items:flex-end;justify-content:center;padding-bottom:1.5px;padding-right:3px;"><span style="font-size:11px;line-height:1;white-space:nowrap;color:#000;">Rp0</span></div>
<div class="a" style="left:668px;top:266px;width:99px;height:20px;background:#558ed5;overflow:hidden;display:flex;align-items:flex-end;justify-content:center;padding-bottom:1.5px;padding-right:3px;"><span style="font-size:11px;line-height:1;white-space:nowrap;color:#000;">Rp0</span></div>
<div class="a" style="left:776px;top:266px;width:86px;height:20px;background:#558ed5;overflow:hidden;display:flex;align-items:flex-end;justify-content:center;padding-bottom:1.5px;padding-right:3px;"><span style="font-size:11px;line-height:1;white-space:nowrap;color:#000;">Rp0</span></div>
<div class="a" style="left:865px;top:266px;width:83px;height:20px;background:#558ed5;overflow:hidden;display:flex;align-items:flex-end;justify-content:center;padding-bottom:1.5px;padding-right:3px;"><span style="font-size:11px;line-height:1;white-space:nowrap;color:#000;">Rp0</span></div>
<div class="a" style="left:952px;top:266px;width:81px;height:20px;background:#558ed5;overflow:hidden;display:flex;align-items:flex-end;justify-content:center;padding-bottom:1.5px;padding-right:3px;"><span style="font-size:11px;line-height:1;white-space:nowrap;color:#000;">Rp0</span></div>
<div class="a" style="left:1060px;top:266px;width:92px;height:20px;background:#c6d9f1;overflow:hidden;display:flex;align-items:flex-end;justify-content:center;padding-bottom:1.5px;padding-right:3px;"><span style="font-size:11px;line-height:1;white-space:nowrap;color:#000;">Rp30,000</span></div>
<div class="a" style="left:1182px;top:266px;width:94px;height:20px;background:#ffc000;overflow:hidden;display:flex;align-items:flex-end;justify-content:center;padding-bottom:1.5px;padding-right:3px;"><span style="font-size:11px;line-height:1;white-space:nowrap;color:#000;">Rp0</span></div>
<div class="a" style="left:1309px;top:266px;width:66px;height:20px;background:#fde9d9;overflow:hidden;display:flex;align-items:flex-end;justify-content:center;padding-bottom:1.5px;padding-right:3px;"><span style="font-size:11px;line-height:1;white-space:nowrap;color:#000;">Rp0</span></div>
<div class="a" style="left:1377px;top:266px;width:67px;height:20px;background:#fde9d9;overflow:hidden;display:flex;align-items:flex-end;justify-content:center;padding-bottom:1.5px;padding-right:3px;"><span style="font-size:11px;line-height:1;white-space:nowrap;color:#000;">Rp0</span></div>
<div class="a" style="left:34px;top:287px;width:45px;height:18px;background:#ffffff;overflow:hidden;display:flex;align-items:flex-end;justify-content:center;padding-bottom:1.5px;padding-left:2.5px;"><span style="font-size:11px;line-height:1;white-space:nowrap;color:#000;">807</span></div>
<div class="a" style="left:85px;top:287px;width:65px;height:18px;background:#ffff00;overflow:hidden;display:flex;align-items:flex-end;justify-content:center;padding-bottom:1.5px;"><span style="font-size:11px;line-height:1;white-space:nowrap;color:#000;">PENDING</span></div>
<div class="a" style="left:153px;top:287px;width:65px;height:18px;background:#ffff00;overflow:hidden;display:flex;align-items:flex-end;justify-content:flex-start;padding-left:3px;padding-bottom:1.5px;"><span style="font-size:11px;line-height:1;white-space:nowrap;color:#000;">PENDING</span></div>
<div class="a" style="left:221px;top:287px;width:95px;height:18px;background:#ffff00;overflow:hidden;display:flex;align-items:flex-end;justify-content:flex-start;padding-left:3px;padding-bottom:1.5px;"></div>
<div class="a" style="left:318px;top:287px;width:236px;height:18px;background:#ffff00;overflow:hidden;display:flex;align-items:flex-end;justify-content:flex-start;padding-left:4px;padding-bottom:1.5px;"><span style="font-size:11px;line-height:1;white-space:nowrap;color:#000;">TRFDN-SARONI ESPAY DEBIT INDONE</span></div>
<div class="a" style="left:566px;top:287px;width:99px;height:18px;background:#558ed5;overflow:hidden;display:flex;align-items:flex-end;justify-content:center;padding-bottom:1.5px;padding-right:3px;"><span style="font-size:11px;line-height:1;white-space:nowrap;color:#000;">Rp0</span></div>
<div class="a" style="left:668px;top:287px;width:99px;height:18px;background:#ff0000;overflow:hidden;display:flex;align-items:flex-end;justify-content:center;padding-bottom:1.5px;padding-right:3px;"><span style="font-size:11px;line-height:1;white-space:nowrap;color:#000;">Rp15,000</span></div>
<div class="a" style="left:776px;top:287px;width:86px;height:18px;background:#558ed5;overflow:hidden;display:flex;align-items:flex-end;justify-content:center;padding-bottom:1.5px;padding-right:3px;"><span style="font-size:11px;line-height:1;white-space:nowrap;color:#000;">Rp0</span></div>
<div class="a" style="left:865px;top:287px;width:83px;height:18px;background:#558ed5;overflow:hidden;display:flex;align-items:flex-end;justify-content:center;padding-bottom:1.5px;padding-right:3px;"><span style="font-size:11px;line-height:1;white-space:nowrap;color:#000;">Rp0</span></div>
<div class="a" style="left:952px;top:287px;width:81px;height:18px;background:#558ed5;overflow:hidden;display:flex;align-items:flex-end;justify-content:center;padding-bottom:1.5px;padding-right:3px;"><span style="font-size:11px;line-height:1;white-space:nowrap;color:#000;">Rp0</span></div>
<div class="a" style="left:1060px;top:287px;width:92px;height:18px;background:#c6d9f1;overflow:hidden;display:flex;align-items:flex-end;justify-content:center;padding-bottom:1.5px;padding-right:3px;"><span style="font-size:11px;line-height:1;white-space:nowrap;color:#000;">Rp0</span></div>
<div class="a" style="left:1182px;top:287px;width:94px;height:18px;background:#ffc000;overflow:hidden;display:flex;align-items:flex-end;justify-content:center;padding-bottom:1.5px;padding-right:3px;"><span style="font-size:11px;line-height:1;white-space:nowrap;color:#000;">Rp0</span></div>
<div class="a" style="left:1309px;top:287px;width:66px;height:18px;background:#fde9d9;overflow:hidden;display:flex;align-items:flex-end;justify-content:center;padding-bottom:1.5px;padding-right:3px;"><span style="font-size:11px;line-height:1;white-space:nowrap;color:#000;">Rp0</span></div>
<div class="a" style="left:1377px;top:287px;width:67px;height:18px;background:#fde9d9;overflow:hidden;display:flex;align-items:flex-end;justify-content:center;padding-bottom:1.5px;padding-right:3px;"><span style="font-size:11px;line-height:1;white-space:nowrap;color:#000;">Rp0</span></div>
<div class="a" style="left:34px;top:306px;width:45px;height:18px;background:#ffffff;overflow:hidden;display:flex;align-items:flex-end;justify-content:center;padding-bottom:1.5px;padding-left:2.5px;"><span style="font-size:11px;line-height:1;white-space:nowrap;color:#000;">1157</span></div>
<div class="a" style="left:85px;top:306px;width:65px;height:18px;background:#ffff00;overflow:hidden;display:flex;align-items:flex-end;justify-content:center;padding-bottom:1.5px;"><span style="font-size:11px;line-height:1;white-space:nowrap;color:#000;">pending</span></div>
<div class="a" style="left:153px;top:306px;width:65px;height:18px;background:#ffff00;overflow:hidden;display:flex;align-items:flex-end;justify-content:flex-start;padding-left:3px;padding-bottom:1.5px;"><span style="font-size:11px;line-height:1;white-space:nowrap;color:#000;">pending</span></div>
<div class="a" style="left:221px;top:306px;width:95px;height:18px;background:#ffff00;overflow:hidden;display:flex;align-items:flex-end;justify-content:flex-start;padding-left:3px;padding-bottom:1.5px;"></div>
<div class="a" style="left:318px;top:306px;width:236px;height:18px;background:#ffff00;overflow:hidden;display:flex;align-items:flex-end;justify-content:flex-start;padding-left:4px;padding-bottom:1.5px;"><span style="font-size:11px;line-height:1;white-space:nowrap;color:#000;">TRSF E-BANKING CR / ZUP HALIMI PURQON</span></div>
<div class="a" style="left:566px;top:306px;width:99px;height:18px;background:#558ed5;overflow:hidden;display:flex;align-items:flex-end;justify-content:center;padding-bottom:1.5px;padding-right:3px;"><span style="font-size:11px;line-height:1;white-space:nowrap;color:#000;">Rp0</span></div>
<div class="a" style="left:668px;top:306px;width:99px;height:18px;background:#558ed5;overflow:hidden;display:flex;align-items:flex-end;justify-content:center;padding-bottom:1.5px;padding-right:3px;"><span style="font-size:11px;line-height:1;white-space:nowrap;color:#000;">Rp0</span></div>
<div class="a" style="left:776px;top:306px;width:86px;height:18px;background:#558ed5;overflow:hidden;display:flex;align-items:flex-end;justify-content:center;padding-bottom:1.5px;padding-right:3px;"><span style="font-size:11px;line-height:1;white-space:nowrap;color:#000;">Rp50,000</span></div>
<div class="a" style="left:865px;top:306px;width:83px;height:18px;background:#558ed5;overflow:hidden;display:flex;align-items:flex-end;justify-content:center;padding-bottom:1.5px;padding-right:3px;"><span style="font-size:11px;line-height:1;white-space:nowrap;color:#000;">Rp0</span></div>
<div class="a" style="left:952px;top:306px;width:81px;height:18px;background:#558ed5;overflow:hidden;display:flex;align-items:flex-end;justify-content:center;padding-bottom:1.5px;padding-right:3px;"><span style="font-size:11px;line-height:1;white-space:nowrap;color:#000;">Rp0</span></div>
<div class="a" style="left:1060px;top:306px;width:92px;height:18px;background:#c6d9f1;overflow:hidden;display:flex;align-items:flex-end;justify-content:center;padding-bottom:1.5px;padding-right:3px;"><span style="font-size:11px;line-height:1;white-space:nowrap;color:#000;">Rp0</span></div>
<div class="a" style="left:1182px;top:306px;width:94px;height:18px;background:#ffc000;overflow:hidden;display:flex;align-items:flex-end;justify-content:center;padding-bottom:1.5px;padding-right:3px;"><span style="font-size:11px;line-height:1;white-space:nowrap;color:#000;">Rp0</span></div>
<div class="a" style="left:1309px;top:306px;width:66px;height:18px;background:#fde9d9;overflow:hidden;display:flex;align-items:flex-end;justify-content:center;padding-bottom:1.5px;padding-right:3px;"><span style="font-size:11px;line-height:1;white-space:nowrap;color:#000;">Rp0</span></div>
<div class="a" style="left:1377px;top:306px;width:67px;height:18px;background:#fde9d9;overflow:hidden;display:flex;align-items:flex-end;justify-content:center;padding-bottom:1.5px;padding-right:3px;"><span style="font-size:11px;line-height:1;white-space:nowrap;color:#000;">Rp0</span></div>
<div class="a" style="left:34px;top:325px;width:45px;height:18px;background:#ffffff;overflow:hidden;display:flex;align-items:flex-end;justify-content:center;padding-bottom:1.5px;padding-left:2.5px;"><span style="font-size:11px;line-height:1;white-space:nowrap;color:#000;">1519</span></div>
<div class="a" style="left:85px;top:325px;width:65px;height:18px;background:#ffff00;overflow:hidden;display:flex;align-items:flex-end;justify-content:center;padding-bottom:1.5px;"><span style="font-size:11px;line-height:1;white-space:nowrap;color:#000;">pending</span></div>
<div class="a" style="left:153px;top:325px;width:65px;height:18px;background:#ffff00;overflow:hidden;display:flex;align-items:flex-end;justify-content:flex-start;padding-left:3px;padding-bottom:1.5px;"><span style="font-size:11px;line-height:1;white-space:nowrap;color:#000;">pending</span></div>
<div class="a" style="left:221px;top:325px;width:95px;height:18px;background:#ffff00;overflow:hidden;display:flex;align-items:flex-end;justify-content:flex-start;padding-left:3px;padding-bottom:1.5px;"></div>
<div class="a" style="left:318px;top:325px;width:236px;height:18px;background:#ffff00;overflow:hidden;display:flex;align-items:flex-end;justify-content:flex-start;padding-left:4px;padding-bottom:1.5px;"><span style="font-size:11px;line-height:1;white-space:nowrap;color:#000;">YUDI SUPARDI</span></div>
<div class="a" style="left:566px;top:325px;width:99px;height:18px;background:#558ed5;overflow:hidden;display:flex;align-items:flex-end;justify-content:center;padding-bottom:1.5px;padding-right:3px;"><span style="font-size:11px;line-height:1;white-space:nowrap;color:#000;">Rp0</span></div>
<div class="a" style="left:668px;top:325px;width:99px;height:18px;background:#558ed5;overflow:hidden;display:flex;align-items:flex-end;justify-content:center;padding-bottom:1.5px;padding-right:3px;"><span style="font-size:11px;line-height:1;white-space:nowrap;color:#000;">Rp0</span></div>
<div class="a" style="left:776px;top:325px;width:86px;height:18px;background:#ff0000;overflow:hidden;display:flex;align-items:flex-end;justify-content:center;padding-bottom:1.5px;padding-right:3px;"><span style="font-size:11px;line-height:1;white-space:nowrap;color:#000;">Rp50</span></div>
<div class="a" style="left:865px;top:325px;width:83px;height:18px;background:#558ed5;overflow:hidden;display:flex;align-items:flex-end;justify-content:center;padding-bottom:1.5px;padding-right:3px;"><span style="font-size:11px;line-height:1;white-space:nowrap;color:#000;">Rp0</span></div>
<div class="a" style="left:952px;top:325px;width:81px;height:18px;background:#558ed5;overflow:hidden;display:flex;align-items:flex-end;justify-content:center;padding-bottom:1.5px;padding-right:3px;"><span style="font-size:11px;line-height:1;white-space:nowrap;color:#000;">Rp0</span></div>
<div class="a" style="left:1060px;top:325px;width:92px;height:18px;background:#c6d9f1;overflow:hidden;display:flex;align-items:flex-end;justify-content:center;padding-bottom:1.5px;padding-right:3px;"><span style="font-size:11px;line-height:1;white-space:nowrap;color:#000;">Rp0</span></div>
<div class="a" style="left:1182px;top:325px;width:94px;height:18px;background:#ffc000;overflow:hidden;display:flex;align-items:flex-end;justify-content:center;padding-bottom:1.5px;padding-right:3px;"><span style="font-size:11px;line-height:1;white-space:nowrap;color:#000;">Rp0</span></div>
<div class="a" style="left:1309px;top:325px;width:66px;height:18px;background:#fde9d9;overflow:hidden;display:flex;align-items:flex-end;justify-content:center;padding-bottom:1.5px;padding-right:3px;"><span style="font-size:11px;line-height:1;white-space:nowrap;color:#000;">Rp0</span></div>
<div class="a" style="left:1377px;top:325px;width:67px;height:18px;background:#fde9d9;overflow:hidden;display:flex;align-items:flex-end;justify-content:center;padding-bottom:1.5px;padding-right:3px;"><span style="font-size:11px;line-height:1;white-space:nowrap;color:#000;">Rp0</span></div>
<div class="a" style="left:34px;top:344px;width:45px;height:18px;background:#ffffff;overflow:hidden;display:flex;align-items:flex-end;justify-content:center;padding-bottom:1.5px;padding-left:2.5px;"><span style="font-size:11px;line-height:1;white-space:nowrap;color:#000;">1659</span></div>
<div class="a" style="left:85px;top:344px;width:65px;height:18px;background:#ffff00;overflow:hidden;display:flex;align-items:flex-end;justify-content:center;padding-bottom:1.5px;"><span style="font-size:11px;line-height:1;white-space:nowrap;color:#000;">pending</span></div>
<div class="a" style="left:153px;top:344px;width:65px;height:18px;background:#ffff00;overflow:hidden;display:flex;align-items:flex-end;justify-content:flex-start;padding-left:3px;padding-bottom:1.5px;"><span style="font-size:11px;line-height:1;white-space:nowrap;color:#000;">pending</span></div>
<div class="a" style="left:221px;top:344px;width:95px;height:18px;background:#ffff00;overflow:hidden;display:flex;align-items:flex-end;justify-content:flex-start;padding-left:3px;padding-bottom:1.5px;"><span style="font-size:11.8px;line-height:1;white-space:nowrap;color:#000;">Wahzou123</span></div>
<div class="a" style="left:318px;top:344px;width:236px;height:18px;background:#c8ee48;overflow:hidden;display:flex;align-items:flex-end;justify-content:flex-start;padding-left:4px;padding-bottom:1.5px;"><span style="font-size:11px;line-height:1;white-space:nowrap;color:#4e6b34;">wahyu permana</span></div>
<div class="a" style="left:566px;top:344px;width:99px;height:18px;background:#558ed5;overflow:hidden;display:flex;align-items:flex-end;justify-content:center;padding-bottom:1.5px;padding-right:3px;"><span style="font-size:11px;line-height:1;white-space:nowrap;color:#000;">Rp0</span></div>
<div class="a" style="left:668px;top:344px;width:99px;height:18px;background:#558ed5;overflow:hidden;display:flex;align-items:flex-end;justify-content:center;padding-bottom:1.5px;padding-right:3px;"><span style="font-size:11px;line-height:1;white-space:nowrap;color:#000;">Rp0</span></div>
<div class="a" style="left:776px;top:344px;width:86px;height:18px;background:#558ed5;overflow:hidden;display:flex;align-items:flex-end;justify-content:center;padding-bottom:1.5px;padding-right:3px;"><span style="font-size:11px;line-height:1;white-space:nowrap;color:#000;">Rp20,000</span></div>
<div class="a" style="left:865px;top:344px;width:83px;height:18px;background:#558ed5;overflow:hidden;display:flex;align-items:flex-end;justify-content:center;padding-bottom:1.5px;padding-right:3px;"><span style="font-size:11px;line-height:1;white-space:nowrap;color:#000;">Rp0</span></div>
<div class="a" style="left:952px;top:344px;width:81px;height:18px;background:#558ed5;overflow:hidden;display:flex;align-items:flex-end;justify-content:center;padding-bottom:1.5px;padding-right:3px;"><span style="font-size:11px;line-height:1;white-space:nowrap;color:#000;">Rp0</span></div>
<div class="a" style="left:1060px;top:344px;width:92px;height:18px;background:#c6d9f1;overflow:hidden;display:flex;align-items:flex-end;justify-content:center;padding-bottom:1.5px;padding-right:3px;"><span style="font-size:11px;line-height:1;white-space:nowrap;color:#000;">Rp0</span></div>
<div class="a" style="left:1182px;top:344px;width:94px;height:18px;background:#ffc000;overflow:hidden;display:flex;align-items:flex-end;justify-content:center;padding-bottom:1.5px;padding-right:3px;"><span style="font-size:11px;line-height:1;white-space:nowrap;color:#000;">Rp0</span></div>
<div class="a" style="left:1309px;top:344px;width:66px;height:18px;background:#fde9d9;overflow:hidden;display:flex;align-items:flex-end;justify-content:center;padding-bottom:1.5px;padding-right:3px;"><span style="font-size:11px;line-height:1;white-space:nowrap;color:#000;">Rp0</span></div>
<div class="a" style="left:1377px;top:344px;width:67px;height:18px;background:#fde9d9;overflow:hidden;display:flex;align-items:flex-end;justify-content:center;padding-bottom:1.5px;padding-right:3px;"><span style="font-size:11px;line-height:1;white-space:nowrap;color:#000;">Rp0</span></div>
<div class="a" style="left:34px;top:363px;width:45px;height:18px;background:#ffffff;overflow:hidden;display:flex;align-items:flex-end;justify-content:center;padding-bottom:1.5px;padding-left:2.5px;"><span style="font-size:11px;line-height:1;white-space:nowrap;color:#000;">2664</span></div>
<div class="a" style="left:85px;top:363px;width:65px;height:18px;background:#ffff00;overflow:hidden;display:flex;align-items:flex-end;justify-content:center;padding-bottom:1.5px;"><span style="font-size:11px;line-height:1;white-space:nowrap;color:#000;">PENDING</span></div>
<div class="a" style="left:153px;top:363px;width:65px;height:18px;background:#ffff00;overflow:hidden;display:flex;align-items:flex-end;justify-content:flex-start;padding-left:3px;padding-bottom:1.5px;"><span style="font-size:11px;line-height:1;white-space:nowrap;color:#000;">PENDING</span></div>
<div class="a" style="left:221px;top:363px;width:95px;height:18px;background:#ffff00;overflow:hidden;display:flex;align-items:flex-end;justify-content:flex-start;padding-left:3px;padding-bottom:1.5px;"></div>
<div class="a" style="left:318px;top:363px;width:236px;height:18px;background:#ffff00;overflow:hidden;display:flex;align-items:flex-end;justify-content:flex-start;padding-left:4px;padding-bottom:1.5px;"><span style="font-size:11px;line-height:1;white-space:nowrap;color:#000;">TRSF E-BANKING CR 2506/FTSCY/WS95031</span></div>
<div class="a" style="left:566px;top:363px;width:99px;height:18px;background:#558ed5;overflow:hidden;display:flex;align-items:flex-end;justify-content:center;padding-bottom:1.5px;padding-right:3px;"><span style="font-size:11px;line-height:1;white-space:nowrap;color:#000;">Rp0</span></div>
<div class="a" style="left:668px;top:363px;width:99px;height:18px;background:#558ed5;overflow:hidden;display:flex;align-items:flex-end;justify-content:center;padding-bottom:1.5px;padding-right:3px;"><span style="font-size:11px;line-height:1;white-space:nowrap;color:#000;">Rp0</span></div>
<div class="a" style="left:776px;top:363px;width:86px;height:18px;background:#558ed5;overflow:hidden;display:flex;align-items:flex-end;justify-content:center;padding-bottom:1.5px;padding-right:3px;"><span style="font-size:11px;line-height:1;white-space:nowrap;color:#000;">Rp0</span></div>
<div class="a" style="left:865px;top:363px;width:83px;height:18px;background:#558ed5;overflow:hidden;display:flex;align-items:flex-end;justify-content:center;padding-bottom:1.5px;padding-right:3px;"><span style="font-size:11px;line-height:1;white-space:nowrap;color:#000;">Rp0</span></div>
<div class="a" style="left:952px;top:363px;width:81px;height:18px;background:#558ed5;overflow:hidden;display:flex;align-items:flex-end;justify-content:center;padding-bottom:1.5px;padding-right:3px;"><span style="font-size:11px;line-height:1;white-space:nowrap;color:#000;">Rp10,000</span></div>
<div class="a" style="left:1060px;top:363px;width:92px;height:18px;background:#c6d9f1;overflow:hidden;display:flex;align-items:flex-end;justify-content:center;padding-bottom:1.5px;padding-right:3px;"><span style="font-size:11px;line-height:1;white-space:nowrap;color:#000;">Rp0</span></div>
<div class="a" style="left:1182px;top:363px;width:94px;height:18px;background:#ffc000;overflow:hidden;display:flex;align-items:flex-end;justify-content:center;padding-bottom:1.5px;padding-right:3px;"><span style="font-size:11px;line-height:1;white-space:nowrap;color:#000;">Rp0</span></div>
<div class="a" style="left:1309px;top:363px;width:66px;height:18px;background:#fde9d9;overflow:hidden;display:flex;align-items:flex-end;justify-content:center;padding-bottom:1.5px;padding-right:3px;"><span style="font-size:11px;line-height:1;white-space:nowrap;color:#000;">Rp0</span></div>
<div class="a" style="left:1377px;top:363px;width:67px;height:18px;background:#fde9d9;overflow:hidden;display:flex;align-items:flex-end;justify-content:center;padding-bottom:1.5px;padding-right:3px;"><span style="font-size:11px;line-height:1;white-space:nowrap;color:#000;">Rp0</span></div>
<div class="a" style="left:34px;top:382px;width:45px;height:18px;background:#ffff00;overflow:hidden;display:flex;align-items:flex-end;justify-content:center;padding-bottom:1.5px;padding-left:2.5px;"><span style="font-size:11px;line-height:1;white-space:nowrap;color:#000;">2973</span></div>
<div class="a" style="left:85px;top:382px;width:65px;height:18px;background:#92d050;overflow:hidden;display:flex;align-items:flex-end;justify-content:center;padding-bottom:1.5px;"><span style="font-size:11px;line-height:1;white-space:nowrap;color:#000;">dp</span></div>
<div class="a" style="left:153px;top:382px;width:65px;height:18px;background:#fdf0d5;overflow:hidden;display:flex;align-items:flex-end;justify-content:flex-start;padding-left:3px;padding-bottom:1.5px;"><span style="font-size:11px;line-height:1;white-space:nowrap;color:#000;">UGDEWA</span></div>
<div class="a" style="left:221px;top:382px;width:95px;height:18px;background:#ffff00;overflow:hidden;display:flex;align-items:flex-end;justify-content:flex-start;padding-left:3px;padding-bottom:1.5px;"><span style="font-size:11px;line-height:1;white-space:nowrap;color:#000;">Windi1027|FORM</span></div>
<div class="a" style="left:318px;top:382px;width:236px;height:18px;background:#ffff00;overflow:hidden;display:flex;align-items:flex-end;justify-content:flex-start;padding-left:4px;padding-bottom:1.5px;"><span style="font-size:11px;line-height:1;white-space:nowrap;color:#000;">Windi Astuti / MANDIRI</span></div>
<div class="a" style="left:566px;top:382px;width:99px;height:18px;background:#ffff00;overflow:hidden;display:flex;align-items:flex-end;justify-content:center;padding-bottom:1.5px;padding-right:3px;"><span style="font-size:11px;line-height:1;white-space:nowrap;color:#000;">Rp0</span></div>
<div class="a" style="left:668px;top:382px;width:99px;height:18px;background:#ffff00;overflow:hidden;display:flex;align-items:flex-end;justify-content:center;padding-bottom:1.5px;padding-right:3px;"><span style="font-size:11px;line-height:1;white-space:nowrap;color:#000;">Rp0</span></div>
<div class="a" style="left:776px;top:382px;width:86px;height:18px;background:#ffff00;overflow:hidden;display:flex;align-items:flex-end;justify-content:center;padding-bottom:1.5px;padding-right:3px;"><span style="font-size:11px;line-height:1;white-space:nowrap;color:#000;">Rp0</span></div>
<div class="a" style="left:865px;top:382px;width:83px;height:18px;background:#ffff00;overflow:hidden;display:flex;align-items:flex-end;justify-content:center;padding-bottom:1.5px;padding-right:3px;"><span style="font-size:11px;line-height:1;white-space:nowrap;color:#000;">Rp0</span></div>
<div class="a" style="left:952px;top:382px;width:81px;height:18px;background:#ffff00;overflow:hidden;display:flex;align-items:flex-end;justify-content:center;padding-bottom:1.5px;padding-right:3px;"><span style="font-size:11px;line-height:1;white-space:nowrap;color:#000;">Rp0</span></div>
<div class="a" style="left:1060px;top:382px;width:92px;height:18px;background:#ffff00;overflow:hidden;display:flex;align-items:flex-end;justify-content:center;padding-bottom:1.5px;padding-right:3px;"><span style="font-size:11px;line-height:1;white-space:nowrap;color:#000;">Rp160,000</span></div>
<div class="a" style="left:1182px;top:382px;width:94px;height:18px;background:#ffff00;overflow:hidden;display:flex;align-items:flex-end;justify-content:center;padding-bottom:1.5px;padding-right:3px;"><span style="font-size:11px;line-height:1;white-space:nowrap;color:#000;">Rp0</span></div>
<div class="a" style="left:1309px;top:382px;width:66px;height:18px;background:#ffff00;overflow:hidden;display:flex;align-items:flex-end;justify-content:center;padding-bottom:1.5px;padding-right:3px;"><span style="font-size:11px;line-height:1;white-space:nowrap;color:#000;">Rp0</span></div>
<div class="a" style="left:1377px;top:382px;width:67px;height:18px;background:#ffff00;overflow:hidden;display:flex;align-items:flex-end;justify-content:center;padding-bottom:1.5px;padding-right:3px;"><span style="font-size:11px;line-height:1;white-space:nowrap;color:#000;">Rp0</span></div>
<div class="a" style="left:34px;top:401px;width:45px;height:18px;background:#ffffff;overflow:hidden;display:flex;align-items:flex-end;justify-content:center;padding-bottom:1.5px;padding-left:2.5px;"><span style="font-size:11px;line-height:1;white-space:nowrap;color:#000;">3395</span></div>
<div class="a" style="left:85px;top:401px;width:65px;height:18px;background:#ffff00;overflow:hidden;display:flex;align-items:flex-end;justify-content:center;padding-bottom:1.5px;"><span style="font-size:11px;line-height:1;white-space:nowrap;color:#000;">PENDING</span></div>
<div class="a" style="left:153px;top:401px;width:65px;height:18px;background:#ffff00;overflow:hidden;display:flex;align-items:flex-end;justify-content:flex-start;padding-left:3px;padding-bottom:1.5px;"><span style="font-size:11px;line-height:1;white-space:nowrap;color:#000;">PENDING</span></div>
<div class="a" style="left:221px;top:401px;width:95px;height:18px;background:#ffff00;overflow:hidden;display:flex;align-items:flex-end;justify-content:flex-start;padding-left:3px;padding-bottom:1.5px;"></div>
<div class="a" style="left:318px;top:401px;width:236px;height:18px;background:#ffff00;overflow:hidden;display:flex;align-items:flex-end;justify-content:flex-start;padding-left:4px;padding-bottom:1.5px;"><span style="font-size:11px;line-height:1;white-space:nowrap;color:#000;">TRI WALUYO</span></div>
<div class="a" style="left:566px;top:401px;width:99px;height:18px;background:#558ed5;overflow:hidden;display:flex;align-items:flex-end;justify-content:center;padding-bottom:1.5px;padding-right:3px;"><span style="font-size:11px;line-height:1;white-space:nowrap;color:#000;">Rp0</span></div>
<div class="a" style="left:668px;top:401px;width:99px;height:18px;background:#558ed5;overflow:hidden;display:flex;align-items:flex-end;justify-content:center;padding-bottom:1.5px;padding-right:3px;"><span style="font-size:11px;line-height:1;white-space:nowrap;color:#000;">Rp0</span></div>
<div class="a" style="left:776px;top:401px;width:86px;height:18px;background:#558ed5;overflow:hidden;display:flex;align-items:flex-end;justify-content:center;padding-bottom:1.5px;padding-right:3px;"><span style="font-size:11px;line-height:1;white-space:nowrap;color:#000;">Rp0</span></div>
<div class="a" style="left:865px;top:401px;width:83px;height:18px;background:#558ed5;overflow:hidden;display:flex;align-items:flex-end;justify-content:center;padding-bottom:1.5px;padding-right:3px;"><span style="font-size:11px;line-height:1;white-space:nowrap;color:#000;">Rp0</span></div>
<div class="a" style="left:952px;top:401px;width:81px;height:18px;background:#558ed5;overflow:hidden;display:flex;align-items:flex-end;justify-content:center;padding-bottom:1.5px;padding-right:3px;"><span style="font-size:11px;line-height:1;white-space:nowrap;color:#000;">Rp0</span></div>
<div class="a" style="left:1060px;top:401px;width:92px;height:18px;background:#c6d9f1;overflow:hidden;display:flex;align-items:flex-end;justify-content:center;padding-bottom:1.5px;padding-right:3px;"><span style="font-size:11px;line-height:1;white-space:nowrap;color:#000;">Rp0</span></div>
<div class="a" style="left:1182px;top:401px;width:94px;height:18px;background:#ffc000;overflow:hidden;display:flex;align-items:flex-end;justify-content:center;padding-bottom:1.5px;padding-right:3px;"><span style="font-size:11px;line-height:1;white-space:nowrap;color:#000;">Rp0</span></div>
<div class="a" style="left:1309px;top:401px;width:66px;height:18px;background:#fde9d9;overflow:hidden;display:flex;align-items:flex-end;justify-content:center;padding-bottom:1.5px;padding-right:3px;"><span style="font-size:11px;line-height:1;white-space:nowrap;color:#000;">Rp0</span></div>
<div class="a" style="left:1377px;top:401px;width:67px;height:18px;background:#fde9d9;overflow:hidden;display:flex;align-items:flex-end;justify-content:center;padding-bottom:1.5px;padding-right:3px;"><span style="font-size:11px;line-height:1;white-space:nowrap;color:#000;">Rp0</span></div>
<div class="a" style="left:34px;top:420px;width:45px;height:18px;background:#ffffff;overflow:hidden;display:flex;align-items:flex-end;justify-content:center;padding-bottom:1.5px;padding-left:2.5px;"><span style="font-size:11px;line-height:1;white-space:nowrap;color:#000;">3651</span></div>
<div class="a" style="left:85px;top:420px;width:65px;height:18px;background:#ffff00;overflow:hidden;display:flex;align-items:flex-end;justify-content:center;padding-bottom:1.5px;"><span style="font-size:11px;line-height:1;white-space:nowrap;color:#000;">PENDING</span></div>
<div class="a" style="left:153px;top:420px;width:65px;height:18px;background:#ffff00;overflow:hidden;display:flex;align-items:flex-end;justify-content:flex-start;padding-left:3px;padding-bottom:1.5px;"><span style="font-size:11px;line-height:1;white-space:nowrap;color:#000;">PENDING</span></div>
<div class="a" style="left:221px;top:420px;width:95px;height:18px;background:#ffff00;overflow:hidden;display:flex;align-items:flex-end;justify-content:flex-start;padding-left:3px;padding-bottom:1.5px;"></div>
<div class="a" style="left:318px;top:420px;width:236px;height:18px;background:#ffff00;overflow:hidden;display:flex;align-items:flex-end;justify-content:flex-start;padding-left:4px;padding-bottom:1.5px;"><span style="font-size:11px;line-height:1;white-space:nowrap;color:#000;">AGUSTINUS ALBANIAN</span></div>
<div class="a" style="left:566px;top:420px;width:99px;height:18px;background:#558ed5;overflow:hidden;display:flex;align-items:flex-end;justify-content:center;padding-bottom:1.5px;padding-right:3px;"><span style="font-size:11px;line-height:1;white-space:nowrap;color:#000;">Rp0</span></div>
<div class="a" style="left:668px;top:420px;width:99px;height:18px;background:#558ed5;overflow:hidden;display:flex;align-items:flex-end;justify-content:center;padding-bottom:1.5px;padding-right:3px;"><span style="font-size:11px;line-height:1;white-space:nowrap;color:#000;">Rp0</span></div>
<div class="a" style="left:776px;top:420px;width:86px;height:18px;background:#558ed5;overflow:hidden;display:flex;align-items:flex-end;justify-content:center;padding-bottom:1.5px;padding-right:3px;"><span style="font-size:11px;line-height:1;white-space:nowrap;color:#000;">Rp0</span></div>
<div class="a" style="left:865px;top:420px;width:83px;height:18px;background:#558ed5;overflow:hidden;display:flex;align-items:flex-end;justify-content:center;padding-bottom:1.5px;padding-right:3px;"><span style="font-size:11px;line-height:1;white-space:nowrap;color:#000;">Rp0</span></div>
<div class="a" style="left:952px;top:420px;width:81px;height:18px;background:#558ed5;overflow:hidden;display:flex;align-items:flex-end;justify-content:center;padding-bottom:1.5px;padding-right:3px;"><span style="font-size:11px;line-height:1;white-space:nowrap;color:#000;">Rp0</span></div>
<div class="a" style="left:1060px;top:420px;width:92px;height:18px;background:#c6d9f1;overflow:hidden;display:flex;align-items:flex-end;justify-content:center;padding-bottom:1.5px;padding-right:3px;"><span style="font-size:11px;line-height:1;white-space:nowrap;color:#000;">Rp0</span></div>
<div class="a" style="left:1182px;top:420px;width:94px;height:18px;background:#ffc000;overflow:hidden;display:flex;align-items:flex-end;justify-content:center;padding-bottom:1.5px;padding-right:3px;"><span style="font-size:11px;line-height:1;white-space:nowrap;color:#000;">Rp0</span></div>
<div class="a" style="left:1309px;top:420px;width:66px;height:18px;background:#fde9d9;overflow:hidden;display:flex;align-items:flex-end;justify-content:center;padding-bottom:1.5px;padding-right:3px;"><span style="font-size:11px;line-height:1;white-space:nowrap;color:#000;">Rp0</span></div>
<div class="a" style="left:1377px;top:420px;width:67px;height:18px;background:#fde9d9;overflow:hidden;display:flex;align-items:flex-end;justify-content:center;padding-bottom:1.5px;padding-right:3px;"><span style="font-size:11px;line-height:1;white-space:nowrap;color:#000;">Rp0</span></div>
<div class="a" style="left:34px;top:439px;width:45px;height:18px;background:#ffffff;overflow:hidden;display:flex;align-items:flex-end;justify-content:center;padding-bottom:1.5px;padding-left:2.5px;"><span style="font-size:11px;line-height:1;white-space:nowrap;color:#000;">4601</span></div>
<div class="a" style="left:85px;top:439px;width:65px;height:18px;background:#ffff00;overflow:hidden;display:flex;align-items:flex-end;justify-content:center;padding-bottom:1.5px;"><span style="font-size:11px;line-height:1;white-space:nowrap;color:#000;">PENDING</span></div>
<div class="a" style="left:153px;top:439px;width:65px;height:18px;background:#ffff00;overflow:hidden;display:flex;align-items:flex-end;justify-content:flex-start;padding-left:3px;padding-bottom:1.5px;"><span style="font-size:11px;line-height:1;white-space:nowrap;color:#000;">PENDING</span></div>
<div class="a" style="left:221px;top:439px;width:95px;height:18px;background:#ffff00;overflow:hidden;display:flex;align-items:flex-end;justify-content:flex-start;padding-left:3px;padding-bottom:1.5px;"></div>
<div class="a" style="left:318px;top:439px;width:236px;height:18px;background:#ffff00;overflow:hidden;display:flex;align-items:flex-end;justify-content:flex-start;padding-left:4px;padding-bottom:1.5px;"><span style="font-size:11px;line-height:1;white-space:nowrap;color:#000;">IDA AYUMORIN D</span></div>
<div class="a" style="left:566px;top:439px;width:99px;height:18px;background:#558ed5;overflow:hidden;display:flex;align-items:flex-end;justify-content:center;padding-bottom:1.5px;padding-right:3px;"><span style="font-size:11px;line-height:1;white-space:nowrap;color:#000;">Rp0</span></div>
<div class="a" style="left:668px;top:439px;width:99px;height:18px;background:#558ed5;overflow:hidden;display:flex;align-items:flex-end;justify-content:center;padding-bottom:1.5px;padding-right:3px;"><span style="font-size:11px;line-height:1;white-space:nowrap;color:#000;">Rp0</span></div>
<div class="a" style="left:776px;top:439px;width:86px;height:18px;background:#558ed5;overflow:hidden;display:flex;align-items:flex-end;justify-content:center;padding-bottom:1.5px;padding-right:3px;"><span style="font-size:11px;line-height:1;white-space:nowrap;color:#000;">Rp0</span></div>
<div class="a" style="left:865px;top:439px;width:83px;height:18px;background:#558ed5;overflow:hidden;display:flex;align-items:flex-end;justify-content:center;padding-bottom:1.5px;padding-right:3px;"><span style="font-size:11px;line-height:1;white-space:nowrap;color:#000;">Rp0</span></div>
<div class="a" style="left:952px;top:439px;width:81px;height:18px;background:#558ed5;overflow:hidden;display:flex;align-items:flex-end;justify-content:center;padding-bottom:1.5px;padding-right:3px;"><span style="font-size:11px;line-height:1;white-space:nowrap;color:#000;">Rp0</span></div>
<div class="a" style="left:1060px;top:439px;width:92px;height:18px;background:#c6d9f1;overflow:hidden;display:flex;align-items:flex-end;justify-content:center;padding-bottom:1.5px;padding-right:3px;"><span style="font-size:11px;line-height:1;white-space:nowrap;color:#000;">Rp0</span></div>
<div class="a" style="left:1182px;top:439px;width:94px;height:18px;background:#ffc000;overflow:hidden;display:flex;align-items:flex-end;justify-content:center;padding-bottom:1.5px;padding-right:3px;"><span style="font-size:11px;line-height:1;white-space:nowrap;color:#000;">Rp0</span></div>
<div class="a" style="left:1309px;top:439px;width:66px;height:18px;background:#fde9d9;overflow:hidden;display:flex;align-items:flex-end;justify-content:center;padding-bottom:1.5px;padding-right:3px;"><span style="font-size:11px;line-height:1;white-space:nowrap;color:#000;">Rp0</span></div>
<div class="a" style="left:1377px;top:439px;width:67px;height:18px;background:#fde9d9;overflow:hidden;display:flex;align-items:flex-end;justify-content:center;padding-bottom:1.5px;padding-right:3px;"><span style="font-size:11px;line-height:1;white-space:nowrap;color:#000;">Rp0</span></div>
<div class="a" style="left:34px;top:458px;width:45px;height:18px;background:#ffffff;overflow:hidden;display:flex;align-items:flex-end;justify-content:center;padding-bottom:1.5px;padding-left:2.5px;"><span style="font-size:11px;line-height:1;white-space:nowrap;color:#000;">4901</span></div>
<div class="a" style="left:85px;top:458px;width:65px;height:18px;background:#ffff00;overflow:hidden;display:flex;align-items:flex-end;justify-content:center;padding-bottom:1.5px;"><span style="font-size:11px;line-height:1;white-space:nowrap;color:#000;">pending</span></div>
<div class="a" style="left:153px;top:458px;width:65px;height:18px;background:#ffff00;overflow:hidden;display:flex;align-items:flex-end;justify-content:flex-start;padding-left:3px;padding-bottom:1.5px;"><span style="font-size:11px;line-height:1;white-space:nowrap;color:#000;">pending</span></div>
<div class="a" style="left:221px;top:458px;width:95px;height:18px;background:#ffff00;overflow:hidden;display:flex;align-items:flex-end;justify-content:flex-start;padding-left:3px;padding-bottom:1.5px;"></div>
<div class="a" style="left:318px;top:458px;width:236px;height:18px;background:#ffff00;overflow:hidden;display:flex;align-items:flex-end;justify-content:flex-start;padding-left:4px;padding-bottom:1.5px;"><span style="font-size:11px;line-height:1;white-space:nowrap;color:#000;">TRFDN-M BASTOMI ESPAY DEBIT INDONE</span></div>
<div class="a" style="left:566px;top:458px;width:99px;height:18px;background:#558ed5;overflow:hidden;display:flex;align-items:flex-end;justify-content:center;padding-bottom:1.5px;padding-right:3px;"><span style="font-size:11px;line-height:1;white-space:nowrap;color:#000;">Rp100,000</span></div>
<div class="a" style="left:668px;top:458px;width:99px;height:18px;background:#558ed5;overflow:hidden;display:flex;align-items:flex-end;justify-content:center;padding-bottom:1.5px;padding-right:3px;"><span style="font-size:11px;line-height:1;white-space:nowrap;color:#000;">Rp0</span></div>
<div class="a" style="left:776px;top:458px;width:86px;height:18px;background:#558ed5;overflow:hidden;display:flex;align-items:flex-end;justify-content:center;padding-bottom:1.5px;padding-right:3px;"><span style="font-size:11px;line-height:1;white-space:nowrap;color:#000;">Rp0</span></div>
<div class="a" style="left:865px;top:458px;width:83px;height:18px;background:#558ed5;overflow:hidden;display:flex;align-items:flex-end;justify-content:center;padding-bottom:1.5px;padding-right:3px;"><span style="font-size:11px;line-height:1;white-space:nowrap;color:#000;">Rp0</span></div>
<div class="a" style="left:952px;top:458px;width:81px;height:18px;background:#558ed5;overflow:hidden;display:flex;align-items:flex-end;justify-content:center;padding-bottom:1.5px;padding-right:3px;"><span style="font-size:11px;line-height:1;white-space:nowrap;color:#000;">Rp0</span></div>
<div class="a" style="left:1060px;top:458px;width:92px;height:18px;background:#c6d9f1;overflow:hidden;display:flex;align-items:flex-end;justify-content:center;padding-bottom:1.5px;padding-right:3px;"><span style="font-size:11px;line-height:1;white-space:nowrap;color:#000;">Rp0</span></div>
<div class="a" style="left:1182px;top:458px;width:94px;height:18px;background:#ffc000;overflow:hidden;display:flex;align-items:flex-end;justify-content:center;padding-bottom:1.5px;padding-right:3px;"><span style="font-size:11px;line-height:1;white-space:nowrap;color:#000;">Rp0</span></div>
<div class="a" style="left:1309px;top:458px;width:66px;height:18px;background:#fde9d9;overflow:hidden;display:flex;align-items:flex-end;justify-content:center;padding-bottom:1.5px;padding-right:3px;"><span style="font-size:11px;line-height:1;white-space:nowrap;color:#000;">Rp0</span></div>
<div class="a" style="left:1377px;top:458px;width:67px;height:18px;background:#fde9d9;overflow:hidden;display:flex;align-items:flex-end;justify-content:center;padding-bottom:1.5px;padding-right:3px;"><span style="font-size:11px;line-height:1;white-space:nowrap;color:#000;">Rp0</span></div>
<div class="a" style="left:34px;top:477px;width:45px;height:18px;background:#ffffff;overflow:hidden;display:flex;align-items:flex-end;justify-content:center;padding-bottom:1.5px;padding-left:2.5px;"><span style="font-size:11px;line-height:1;white-space:nowrap;color:#000;">5199</span></div>
<div class="a" style="left:85px;top:477px;width:65px;height:18px;background:#ffff00;overflow:hidden;display:flex;align-items:flex-end;justify-content:center;padding-bottom:1.5px;"></div>
<div class="a" style="left:153px;top:477px;width:65px;height:18px;background:#ffff00;overflow:hidden;display:flex;align-items:flex-end;justify-content:flex-start;padding-left:3px;padding-bottom:1.5px;"></div>
<div class="a" style="left:221px;top:477px;width:95px;height:18px;background:#ffff00;overflow:hidden;display:flex;align-items:flex-end;justify-content:flex-start;padding-left:3px;padding-bottom:1.5px;"></div>
<div class="a" style="left:318px;top:477px;width:236px;height:18px;background:#ffff00;overflow:hidden;display:flex;align-items:flex-end;justify-content:flex-start;padding-left:4px;padding-bottom:1.5px;"></div>
<div class="a" style="left:566px;top:477px;width:99px;height:18px;background:#558ed5;overflow:hidden;display:flex;align-items:flex-end;justify-content:center;padding-bottom:1.5px;padding-right:3px;"><span style="font-size:11px;line-height:1;white-space:nowrap;color:#000;">Rp0</span></div>
<div class="a" style="left:668px;top:477px;width:99px;height:18px;background:#558ed5;overflow:hidden;display:flex;align-items:flex-end;justify-content:center;padding-bottom:1.5px;padding-right:3px;"><span style="font-size:11px;line-height:1;white-space:nowrap;color:#000;">Rp0</span></div>
<div class="a" style="left:776px;top:477px;width:86px;height:18px;background:#558ed5;overflow:hidden;display:flex;align-items:flex-end;justify-content:center;padding-bottom:1.5px;padding-right:3px;"><span style="font-size:11px;line-height:1;white-space:nowrap;color:#000;">Rp0</span></div>
<div class="a" style="left:865px;top:477px;width:83px;height:18px;background:#558ed5;overflow:hidden;display:flex;align-items:flex-end;justify-content:center;padding-bottom:1.5px;padding-right:3px;"><span style="font-size:11px;line-height:1;white-space:nowrap;color:#000;">Rp0</span></div>
<div class="a" style="left:952px;top:477px;width:81px;height:18px;background:#558ed5;overflow:hidden;display:flex;align-items:flex-end;justify-content:center;padding-bottom:1.5px;padding-right:3px;"><span style="font-size:11px;line-height:1;white-space:nowrap;color:#000;">Rp0</span></div>
<div class="a" style="left:1060px;top:477px;width:92px;height:18px;background:#c6d9f1;overflow:hidden;display:flex;align-items:flex-end;justify-content:center;padding-bottom:1.5px;padding-right:3px;"><span style="font-size:11px;line-height:1;white-space:nowrap;color:#000;">Rp0</span></div>
<div class="a" style="left:1182px;top:477px;width:94px;height:18px;background:#ffc000;overflow:hidden;display:flex;align-items:flex-end;justify-content:center;padding-bottom:1.5px;padding-right:3px;"><span style="font-size:11px;line-height:1;white-space:nowrap;color:#000;">Rp0</span></div>
<div class="a" style="left:1309px;top:477px;width:66px;height:18px;background:#fde9d9;overflow:hidden;display:flex;align-items:flex-end;justify-content:center;padding-bottom:1.5px;padding-right:3px;"><span style="font-size:11px;line-height:1;white-space:nowrap;color:#000;">Rp0</span></div>
<div class="a" style="left:1377px;top:477px;width:67px;height:18px;background:#fde9d9;overflow:hidden;display:flex;align-items:flex-end;justify-content:center;padding-bottom:1.5px;padding-right:3px;"><span style="font-size:11px;line-height:1;white-space:nowrap;color:#000;">Rp0</span></div>
<div class="a" style="left:34px;top:496px;width:45px;height:18px;background:#ffffff;overflow:hidden;display:flex;align-items:flex-end;justify-content:center;padding-bottom:1.5px;padding-left:2.5px;"><span style="font-size:11px;line-height:1;white-space:nowrap;color:#000;">5249</span></div>
<div class="a" style="left:85px;top:496px;width:65px;height:18px;background:#ffff00;overflow:hidden;display:flex;align-items:flex-end;justify-content:center;padding-bottom:1.5px;"><span style="font-size:11px;line-height:1;white-space:nowrap;color:#000;">PENDING</span></div>
<div class="a" style="left:153px;top:496px;width:65px;height:18px;background:#ffff00;overflow:hidden;display:flex;align-items:flex-end;justify-content:flex-start;padding-left:3px;padding-bottom:1.5px;"><span style="font-size:11px;line-height:1;white-space:nowrap;color:#000;">PENDING</span></div>
<div class="a" style="left:221px;top:496px;width:95px;height:18px;background:#ffff00;overflow:hidden;display:flex;align-items:flex-end;justify-content:flex-start;padding-left:3px;padding-bottom:1.5px;"></div>
<div class="a" style="left:318px;top:496px;width:236px;height:18px;background:#ffff00;overflow:hidden;display:flex;align-items:flex-end;justify-content:flex-start;padding-left:4px;padding-bottom:1.5px;"><span style="font-size:11px;line-height:1;white-space:nowrap;color:#000;">ADRI GUS</span></div>
<div class="a" style="left:566px;top:496px;width:99px;height:18px;background:#558ed5;overflow:hidden;display:flex;align-items:flex-end;justify-content:center;padding-bottom:1.5px;padding-right:3px;"><span style="font-size:11px;line-height:1;white-space:nowrap;color:#000;">Rp0</span></div>
<div class="a" style="left:668px;top:496px;width:99px;height:18px;background:#558ed5;overflow:hidden;display:flex;align-items:flex-end;justify-content:center;padding-bottom:1.5px;padding-right:3px;"><span style="font-size:11px;line-height:1;white-space:nowrap;color:#000;">Rp0</span></div>
<div class="a" style="left:776px;top:496px;width:86px;height:18px;background:#558ed5;overflow:hidden;display:flex;align-items:flex-end;justify-content:center;padding-bottom:1.5px;padding-right:3px;"><span style="font-size:11px;line-height:1;white-space:nowrap;color:#000;">Rp0</span></div>
<div class="a" style="left:865px;top:496px;width:83px;height:18px;background:#558ed5;overflow:hidden;display:flex;align-items:flex-end;justify-content:center;padding-bottom:1.5px;padding-right:3px;"><span style="font-size:11px;line-height:1;white-space:nowrap;color:#000;">Rp0</span></div>
<div class="a" style="left:952px;top:496px;width:81px;height:18px;background:#558ed5;overflow:hidden;display:flex;align-items:flex-end;justify-content:center;padding-bottom:1.5px;padding-right:3px;"><span style="font-size:11px;line-height:1;white-space:nowrap;color:#000;">Rp0</span></div>
<div class="a" style="left:1060px;top:496px;width:92px;height:18px;background:#c6d9f1;overflow:hidden;display:flex;align-items:flex-end;justify-content:center;padding-bottom:1.5px;padding-right:3px;"><span style="font-size:11px;line-height:1;white-space:nowrap;color:#000;">Rp0</span></div>
<div class="a" style="left:1182px;top:496px;width:94px;height:18px;background:#ffc000;overflow:hidden;display:flex;align-items:flex-end;justify-content:center;padding-bottom:1.5px;padding-right:3px;"><span style="font-size:11px;line-height:1;white-space:nowrap;color:#000;">Rp0</span></div>
<div class="a" style="left:1309px;top:496px;width:66px;height:18px;background:#fde9d9;overflow:hidden;display:flex;align-items:flex-end;justify-content:center;padding-bottom:1.5px;padding-right:3px;"><span style="font-size:11px;line-height:1;white-space:nowrap;color:#000;">Rp0</span></div>
<div class="a" style="left:1377px;top:496px;width:67px;height:18px;background:#ff0000;overflow:hidden;display:flex;align-items:flex-end;justify-content:center;padding-bottom:1.5px;padding-right:3px;"><span style="font-size:11px;line-height:1;white-space:nowrap;color:#000;">Rp10,000</span></div>
<div class="a" style="left:34px;top:515px;width:45px;height:18px;background:#ffffff;overflow:hidden;display:flex;align-items:flex-end;justify-content:center;padding-bottom:1.5px;padding-left:2.5px;"><span style="font-size:11px;line-height:1;white-space:nowrap;color:#000;">5354</span></div>
<div class="a" style="left:85px;top:515px;width:65px;height:18px;background:#92d050;overflow:hidden;display:flex;align-items:flex-end;justify-content:center;padding-bottom:1.5px;"><span style="font-size:11px;line-height:1;white-space:nowrap;color:#000;">dp</span></div>
<div class="a" style="left:153px;top:515px;width:65px;height:18px;background:#fdf0d5;overflow:hidden;display:flex;align-items:flex-end;justify-content:flex-start;padding-left:3px;padding-bottom:1.5px;"><span style="font-size:11px;line-height:1;white-space:nowrap;color:#000;">UGDEWA</span></div>
<div class="a" style="left:221px;top:515px;width:95px;height:18px;background:#ffff00;overflow:hidden;display:flex;align-items:flex-end;justify-content:flex-start;padding-left:3px;padding-bottom:1.5px;"><span style="font-size:11.8px;line-height:1;white-space:nowrap;color:#000;">Ikan12h</span></div>
<div class="a" style="left:318px;top:515px;width:236px;height:18px;background:#ffffff;overflow:hidden;display:flex;align-items:flex-end;justify-content:flex-start;padding-left:4px;padding-bottom:3px;"><span style="font-size:11px;line-height:1;white-space:nowrap;color:#000;letter-spacing:0.45px;">HIDAYAT | 1from</span></div>
<div class="a" style="left:566px;top:515px;width:99px;height:18px;background:#ff0000;overflow:hidden;display:flex;align-items:flex-end;justify-content:center;padding-bottom:1.5px;padding-right:3px;"><span style="font-size:11px;line-height:1;white-space:nowrap;color:#000;">Rp10,000</span></div>
<div class="a" style="left:668px;top:515px;width:99px;height:18px;background:#558ed5;overflow:hidden;display:flex;align-items:flex-end;justify-content:center;padding-bottom:1.5px;padding-right:3px;"><span style="font-size:11px;line-height:1;white-space:nowrap;color:#000;">Rp0</span></div>
<div class="a" style="left:776px;top:515px;width:86px;height:18px;background:#558ed5;overflow:hidden;display:flex;align-items:flex-end;justify-content:center;padding-bottom:1.5px;padding-right:3px;"><span style="font-size:11px;line-height:1;white-space:nowrap;color:#000;">Rp0</span></div>
<div class="a" style="left:865px;top:515px;width:83px;height:18px;background:#558ed5;overflow:hidden;display:flex;align-items:flex-end;justify-content:center;padding-bottom:1.5px;padding-right:3px;"><span style="font-size:11px;line-height:1;white-space:nowrap;color:#000;">Rp0</span></div>
<div class="a" style="left:952px;top:515px;width:81px;height:18px;background:#558ed5;overflow:hidden;display:flex;align-items:flex-end;justify-content:center;padding-bottom:1.5px;padding-right:3px;"><span style="font-size:11px;line-height:1;white-space:nowrap;color:#000;">Rp0</span></div>
<div class="a" style="left:1060px;top:515px;width:92px;height:18px;background:#c6d9f1;overflow:hidden;display:flex;align-items:flex-end;justify-content:center;padding-bottom:1.5px;padding-right:3px;"><span style="font-size:11px;line-height:1;white-space:nowrap;color:#000;">Rp0</span></div>
<div class="a" style="left:1182px;top:515px;width:94px;height:18px;background:#ffc000;overflow:hidden;display:flex;align-items:flex-end;justify-content:center;padding-bottom:1.5px;padding-right:3px;"><span style="font-size:11px;line-height:1;white-space:nowrap;color:#000;">Rp0</span></div>
<div class="a" style="left:1309px;top:515px;width:66px;height:18px;background:#fde9d9;overflow:hidden;display:flex;align-items:flex-end;justify-content:center;padding-bottom:1.5px;padding-right:3px;"><span style="font-size:11px;line-height:1;white-space:nowrap;color:#000;">Rp0</span></div>
<div class="a" style="left:1377px;top:515px;width:67px;height:18px;background:#fde9d9;overflow:hidden;display:flex;align-items:flex-end;justify-content:center;padding-bottom:1.5px;padding-right:3px;"><span style="font-size:11px;line-height:1;white-space:nowrap;color:#000;">Rp0</span></div>
<div class="a" style="left:34px;top:534px;width:45px;height:18px;background:#ffffff;overflow:hidden;display:flex;align-items:flex-end;justify-content:center;padding-bottom:1.5px;padding-left:2.5px;"><span style="font-size:11px;line-height:1;white-space:nowrap;color:#000;">5593</span></div>
<div class="a" style="left:85px;top:534px;width:65px;height:18px;background:#92d050;overflow:hidden;display:flex;align-items:flex-end;justify-content:center;padding-bottom:1.5px;"><span style="font-size:11px;line-height:1;white-space:nowrap;color:#000;">dp</span></div>
<div class="a" style="left:153px;top:534px;width:65px;height:18px;background:#fdf0d5;overflow:hidden;display:flex;align-items:flex-end;justify-content:flex-start;padding-left:3px;padding-bottom:1.5px;"><span style="font-size:11px;line-height:1;white-space:nowrap;color:#000;">UGDEWA</span></div>
<div class="a" style="left:221px;top:534px;width:95px;height:18px;background:#ffff00;overflow:hidden;display:flex;align-items:flex-end;justify-content:flex-start;padding-left:3px;padding-bottom:1.5px;"><span style="font-size:11.8px;line-height:1;white-space:nowrap;color:#000;">sipurjp19</span></div>
<div class="a" style="left:318px;top:534px;width:236px;height:18px;background:#ffff00;overflow:hidden;display:flex;align-items:flex-end;justify-content:flex-start;padding-left:4px;padding-bottom:1.5px;"><span style="font-size:11px;line-height:1;white-space:nowrap;color:#000;">THREE FITROTUN MAB</span></div>
<div class="a" style="left:566px;top:534px;width:99px;height:18px;background:#558ed5;overflow:hidden;display:flex;align-items:flex-end;justify-content:center;padding-bottom:1.5px;padding-right:3px;"><span style="font-size:11px;line-height:1;white-space:nowrap;color:#000;">Rp0</span></div>
<div class="a" style="left:668px;top:534px;width:99px;height:18px;background:#558ed5;overflow:hidden;display:flex;align-items:flex-end;justify-content:center;padding-bottom:1.5px;padding-right:3px;"><span style="font-size:11px;line-height:1;white-space:nowrap;color:#000;">Rp70,000</span></div>
<div class="a" style="left:776px;top:534px;width:86px;height:18px;background:#558ed5;overflow:hidden;display:flex;align-items:flex-end;justify-content:center;padding-bottom:1.5px;padding-right:3px;"><span style="font-size:11px;line-height:1;white-space:nowrap;color:#000;">Rp0</span></div>
<div class="a" style="left:865px;top:534px;width:83px;height:18px;background:#558ed5;overflow:hidden;display:flex;align-items:flex-end;justify-content:center;padding-bottom:1.5px;padding-right:3px;"><span style="font-size:11px;line-height:1;white-space:nowrap;color:#000;">Rp0</span></div>
<div class="a" style="left:952px;top:534px;width:81px;height:18px;background:#558ed5;overflow:hidden;display:flex;align-items:flex-end;justify-content:center;padding-bottom:1.5px;padding-right:3px;"><span style="font-size:11px;line-height:1;white-space:nowrap;color:#000;">Rp0</span></div>
<div class="a" style="left:1060px;top:534px;width:92px;height:18px;background:#c6d9f1;overflow:hidden;display:flex;align-items:flex-end;justify-content:center;padding-bottom:1.5px;padding-right:3px;"><span style="font-size:11px;line-height:1;white-space:nowrap;color:#000;">Rp0</span></div>
<div class="a" style="left:1182px;top:534px;width:94px;height:18px;background:#ffc000;overflow:hidden;display:flex;align-items:flex-end;justify-content:center;padding-bottom:1.5px;padding-right:3px;"><span style="font-size:11px;line-height:1;white-space:nowrap;color:#000;">Rp0</span></div>
<div class="a" style="left:1309px;top:534px;width:66px;height:18px;background:#fde9d9;overflow:hidden;display:flex;align-items:flex-end;justify-content:center;padding-bottom:1.5px;padding-right:3px;"><span style="font-size:11px;line-height:1;white-space:nowrap;color:#000;">Rp0</span></div>
<div class="a" style="left:1377px;top:534px;width:67px;height:18px;background:#fde9d9;overflow:hidden;display:flex;align-items:flex-end;justify-content:center;padding-bottom:1.5px;padding-right:3px;"><span style="font-size:11px;line-height:1;white-space:nowrap;color:#000;">Rp0</span></div>
<div class="a" style="left:34px;top:553px;width:45px;height:18px;background:#ffffff;overflow:hidden;display:flex;align-items:flex-end;justify-content:center;padding-bottom:1.5px;padding-left:2.5px;"><span style="font-size:11px;line-height:1;white-space:nowrap;color:#000;">5596</span></div>
<div class="a" style="left:85px;top:553px;width:65px;height:18px;background:#92d050;overflow:hidden;display:flex;align-items:flex-end;justify-content:center;padding-bottom:1.5px;"><span style="font-size:11px;line-height:1;white-space:nowrap;color:#000;">dp</span></div>
<div class="a" style="left:153px;top:553px;width:65px;height:18px;background:#fdf0d5;overflow:hidden;display:flex;align-items:flex-end;justify-content:flex-start;padding-left:3px;padding-bottom:1.5px;"><span style="font-size:11px;line-height:1;white-space:nowrap;color:#000;">UGDEWA</span></div>
<div class="a" style="left:221px;top:553px;width:95px;height:18px;background:#ffff00;overflow:hidden;display:flex;align-items:flex-end;justify-content:flex-start;padding-left:3px;padding-bottom:1.5px;"><span style="font-size:11.8px;line-height:1;white-space:nowrap;color:#000;">GACOR77777</span></div>
<div class="a" style="left:318px;top:553px;width:236px;height:18px;background:#ffff00;overflow:hidden;display:flex;align-items:flex-end;justify-content:flex-start;padding-left:4px;padding-bottom:1.5px;"><span style="font-size:11px;line-height:1;white-space:nowrap;color:#000;">chaerani</span></div>
<div class="a" style="left:566px;top:553px;width:99px;height:18px;background:#558ed5;overflow:hidden;display:flex;align-items:flex-end;justify-content:center;padding-bottom:1.5px;padding-right:3px;"><span style="font-size:11px;line-height:1;white-space:nowrap;color:#000;">Rp0</span></div>
<div class="a" style="left:668px;top:553px;width:99px;height:18px;background:#558ed5;overflow:hidden;display:flex;align-items:flex-end;justify-content:center;padding-bottom:1.5px;padding-right:3px;"><span style="font-size:11px;line-height:1;white-space:nowrap;color:#000;">Rp140,000</span></div>
<div class="a" style="left:776px;top:553px;width:86px;height:18px;background:#558ed5;overflow:hidden;display:flex;align-items:flex-end;justify-content:center;padding-bottom:1.5px;padding-right:3px;"><span style="font-size:11px;line-height:1;white-space:nowrap;color:#000;">Rp0</span></div>
<div class="a" style="left:865px;top:553px;width:83px;height:18px;background:#558ed5;overflow:hidden;display:flex;align-items:flex-end;justify-content:center;padding-bottom:1.5px;padding-right:3px;"><span style="font-size:11px;line-height:1;white-space:nowrap;color:#000;">Rp0</span></div>
<div class="a" style="left:952px;top:553px;width:81px;height:18px;background:#558ed5;overflow:hidden;display:flex;align-items:flex-end;justify-content:center;padding-bottom:1.5px;padding-right:3px;"><span style="font-size:11px;line-height:1;white-space:nowrap;color:#000;">Rp0</span></div>
<div class="a" style="left:1060px;top:553px;width:92px;height:18px;background:#c6d9f1;overflow:hidden;display:flex;align-items:flex-end;justify-content:center;padding-bottom:1.5px;padding-right:3px;"><span style="font-size:11px;line-height:1;white-space:nowrap;color:#000;">Rp0</span></div>
<div class="a" style="left:1182px;top:553px;width:94px;height:18px;background:#ffc000;overflow:hidden;display:flex;align-items:flex-end;justify-content:center;padding-bottom:1.5px;padding-right:3px;"><span style="font-size:11px;line-height:1;white-space:nowrap;color:#000;">Rp0</span></div>
<div class="a" style="left:1309px;top:553px;width:66px;height:18px;background:#fde9d9;overflow:hidden;display:flex;align-items:flex-end;justify-content:center;padding-bottom:1.5px;padding-right:3px;"><span style="font-size:11px;line-height:1;white-space:nowrap;color:#000;">Rp0</span></div>
<div class="a" style="left:1377px;top:553px;width:67px;height:18px;background:#fde9d9;overflow:hidden;display:flex;align-items:flex-end;justify-content:center;padding-bottom:1.5px;padding-right:3px;"><span style="font-size:11px;line-height:1;white-space:nowrap;color:#000;">Rp0</span></div>
<div class="a" style="left:34px;top:572px;width:45px;height:18px;background:#ffffff;overflow:hidden;display:flex;align-items:flex-end;justify-content:center;padding-bottom:1.5px;padding-left:2.5px;"><span style="font-size:11px;line-height:1;white-space:nowrap;color:#000;">5603</span></div>
<div class="a" style="left:85px;top:572px;width:65px;height:18px;background:#92d050;overflow:hidden;display:flex;align-items:flex-end;justify-content:center;padding-bottom:1.5px;"><span style="font-size:11px;line-height:1;white-space:nowrap;color:#000;">dp</span></div>
<div class="a" style="left:153px;top:572px;width:65px;height:18px;background:#fdf0d5;overflow:hidden;display:flex;align-items:flex-end;justify-content:flex-start;padding-left:3px;padding-bottom:1.5px;"><span style="font-size:11px;line-height:1;white-space:nowrap;color:#000;">UGDEWA</span></div>
<div class="a" style="left:221px;top:572px;width:95px;height:18px;background:#ffff00;overflow:hidden;display:flex;align-items:flex-end;justify-content:flex-start;padding-left:3px;padding-bottom:1.5px;"><span style="font-size:11.8px;line-height:1;white-space:nowrap;color:#000;">Pap110281</span></div>
<div class="a" style="left:318px;top:572px;width:236px;height:18px;background:#ffff00;overflow:hidden;display:flex;align-items:flex-end;justify-content:flex-start;padding-left:4px;padding-bottom:1.5px;"><span style="font-size:11px;line-height:1;white-space:nowrap;color:#000;">tedi bach</span></div>
<div class="a" style="left:566px;top:572px;width:99px;height:18px;background:#558ed5;overflow:hidden;display:flex;align-items:flex-end;justify-content:center;padding-bottom:1.5px;padding-right:3px;"><span style="font-size:11px;line-height:1;white-space:nowrap;color:#000;">Rp0</span></div>
<div class="a" style="left:668px;top:572px;width:99px;height:18px;background:#558ed5;overflow:hidden;display:flex;align-items:flex-end;justify-content:center;padding-bottom:1.5px;padding-right:3px;"><span style="font-size:11px;line-height:1;white-space:nowrap;color:#000;">Rp105,000</span></div>
<div class="a" style="left:776px;top:572px;width:86px;height:18px;background:#558ed5;overflow:hidden;display:flex;align-items:flex-end;justify-content:center;padding-bottom:1.5px;padding-right:3px;"><span style="font-size:11px;line-height:1;white-space:nowrap;color:#000;">Rp0</span></div>
<div class="a" style="left:865px;top:572px;width:83px;height:18px;background:#558ed5;overflow:hidden;display:flex;align-items:flex-end;justify-content:center;padding-bottom:1.5px;padding-right:3px;"><span style="font-size:11px;line-height:1;white-space:nowrap;color:#000;">Rp0</span></div>
<div class="a" style="left:952px;top:572px;width:81px;height:18px;background:#558ed5;overflow:hidden;display:flex;align-items:flex-end;justify-content:center;padding-bottom:1.5px;padding-right:3px;"><span style="font-size:11px;line-height:1;white-space:nowrap;color:#000;">Rp0</span></div>
<div class="a" style="left:1060px;top:572px;width:92px;height:18px;background:#c6d9f1;overflow:hidden;display:flex;align-items:flex-end;justify-content:center;padding-bottom:1.5px;padding-right:3px;"><span style="font-size:11px;line-height:1;white-space:nowrap;color:#000;">Rp0</span></div>
<div class="a" style="left:1182px;top:572px;width:94px;height:18px;background:#ffc000;overflow:hidden;display:flex;align-items:flex-end;justify-content:center;padding-bottom:1.5px;padding-right:3px;"><span style="font-size:11px;line-height:1;white-space:nowrap;color:#000;">Rp0</span></div>
<div class="a" style="left:1309px;top:572px;width:66px;height:18px;background:#fde9d9;overflow:hidden;display:flex;align-items:flex-end;justify-content:center;padding-bottom:1.5px;padding-right:3px;"><span style="font-size:11px;line-height:1;white-space:nowrap;color:#000;">Rp0</span></div>
<div class="a" style="left:1377px;top:572px;width:67px;height:18px;background:#fde9d9;overflow:hidden;display:flex;align-items:flex-end;justify-content:center;padding-bottom:1.5px;padding-right:3px;"><span style="font-size:11px;line-height:1;white-space:nowrap;color:#000;">Rp0</span></div>
<div class="a" style="left:34px;top:591px;width:45px;height:18px;background:#ffffff;overflow:hidden;display:flex;align-items:flex-end;justify-content:center;padding-bottom:3.5px;padding-left:2.5px;"><span style="font-size:11px;line-height:1;white-space:nowrap;color:#000;">18</span></div>
<div class="a" style="left:85px;top:591px;width:65px;height:18px;background:#ffff00;overflow:hidden;display:flex;align-items:flex-end;justify-content:center;padding-bottom:1.5px;"><span style="font-size:11px;line-height:1;white-space:nowrap;color:#000;">PENDING</span></div>
<div class="a" style="left:153px;top:591px;width:65px;height:18px;background:#ffff00;overflow:hidden;display:flex;align-items:flex-end;justify-content:flex-start;padding-left:3px;padding-bottom:1.5px;"><span style="font-size:11px;line-height:1;white-space:nowrap;color:#000;">PENDING</span></div>
<div class="a" style="left:221px;top:591px;width:95px;height:18px;background:#ffff00;overflow:hidden;display:flex;align-items:flex-end;justify-content:flex-start;padding-left:3px;padding-bottom:1.5px;"></div>
<div class="a" style="left:318px;top:591px;width:236px;height:18px;background:#ffff00;overflow:hidden;display:flex;align-items:flex-end;justify-content:flex-start;padding-left:4px;padding-bottom:3.5px;"><span style="font-size:11px;line-height:1;white-space:nowrap;color:#000;">RENDI AJI SASMITA</span></div>
<div class="a" style="left:566px;top:591px;width:99px;height:18px;background:#558ed5;overflow:hidden;display:flex;align-items:flex-end;justify-content:center;padding-bottom:3.5px;padding-right:3px;"><span style="font-size:11px;line-height:1;white-space:nowrap;color:#000;">Rp0</span></div>
<div class="a" style="left:668px;top:591px;width:99px;height:18px;background:#558ed5;overflow:hidden;display:flex;align-items:flex-end;justify-content:center;padding-bottom:3.5px;padding-right:3px;"><span style="font-size:11px;line-height:1;white-space:nowrap;color:#000;">Rp0</span></div>
<div class="a" style="left:776px;top:591px;width:86px;height:18px;background:#558ed5;overflow:hidden;display:flex;align-items:flex-end;justify-content:center;padding-bottom:3.5px;padding-right:3px;"><span style="font-size:11px;line-height:1;white-space:nowrap;color:#000;">Rp30,000</span></div>
<div class="a" style="left:865px;top:591px;width:83px;height:18px;background:#558ed5;overflow:hidden;display:flex;align-items:flex-end;justify-content:center;padding-bottom:3.5px;padding-right:3px;"><span style="font-size:11px;line-height:1;white-space:nowrap;color:#000;">Rp0</span></div>
<div class="a" style="left:952px;top:591px;width:81px;height:18px;background:#558ed5;overflow:hidden;display:flex;align-items:flex-end;justify-content:center;padding-bottom:3.5px;padding-right:3px;"><span style="font-size:11px;line-height:1;white-space:nowrap;color:#000;">Rp0</span></div>
<div class="a" style="left:1060px;top:591px;width:92px;height:18px;background:#c6d9f1;overflow:hidden;display:flex;align-items:flex-end;justify-content:center;padding-bottom:3.5px;padding-right:3px;"><span style="font-size:11px;line-height:1;white-space:nowrap;color:#000;">Rp0</span></div>
<div class="a" style="left:1182px;top:591px;width:94px;height:18px;background:#ffc000;overflow:hidden;display:flex;align-items:flex-end;justify-content:center;padding-bottom:3.5px;padding-right:3px;"><span style="font-size:11px;line-height:1;white-space:nowrap;color:#000;">Rp0</span></div>
<div class="a" style="left:1309px;top:591px;width:66px;height:18px;background:#fde9d9;overflow:hidden;display:flex;align-items:flex-end;justify-content:center;padding-bottom:3.5px;padding-right:3px;"><span style="font-size:11px;line-height:1;white-space:nowrap;color:#000;">Rp0</span></div>
<div class="a" style="left:1377px;top:591px;width:67px;height:18px;background:#fde9d9;overflow:hidden;display:flex;align-items:flex-end;justify-content:center;padding-bottom:3.5px;padding-right:3px;"><span style="font-size:11px;line-height:1;white-space:nowrap;color:#000;">Rp0</span></div>
<div class="a" style="left:34px;top:610px;width:45px;height:18px;background:#ffff00;overflow:hidden;display:flex;align-items:flex-end;justify-content:center;padding-bottom:3.5px;padding-left:2.5px;"><span style="font-size:11px;line-height:1;white-space:nowrap;color:#000;">21</span></div>
<div class="a" style="left:85px;top:610px;width:65px;height:18px;background:#92d050;overflow:hidden;display:flex;align-items:flex-end;justify-content:center;padding-bottom:3.5px;"><span style="font-size:11px;line-height:1;white-space:nowrap;color:#000;">dp</span></div>
<div class="a" style="left:153px;top:610px;width:65px;height:18px;background:#fdf0d5;overflow:hidden;display:flex;align-items:flex-end;justify-content:flex-start;padding-left:3px;padding-bottom:3.5px;"><span style="font-size:11px;line-height:1;white-space:nowrap;color:#000;">UGDEWA</span></div>
<div class="a" style="left:221px;top:610px;width:95px;height:18px;background:#ffff00;overflow:hidden;display:flex;align-items:flex-end;justify-content:flex-start;padding-left:3px;padding-bottom:3.5px;"><span style="font-size:11px;line-height:1;white-space:nowrap;color:#000;letter-spacing:0.4px;">k0m022|FORM D</span></div>
<div class="a" style="left:318px;top:610px;width:236px;height:18px;background:#ffff00;overflow:hidden;display:flex;align-items:flex-end;justify-content:flex-start;padding-left:4px;padding-bottom:3.5px;"><span style="font-size:11px;line-height:1;white-space:nowrap;color:#000;letter-spacing:0.45px;">Ramon Drawin Wixiantara Putra / BCA</span></div>
<div class="a" style="left:566px;top:610px;width:99px;height:18px;background:#ffff00;overflow:hidden;display:flex;align-items:flex-end;justify-content:center;padding-bottom:3.5px;padding-right:3px;"><span style="font-size:11px;line-height:1;white-space:nowrap;color:#000;">Rp0</span></div>
<div class="a" style="left:668px;top:610px;width:99px;height:18px;background:#ffff00;overflow:hidden;display:flex;align-items:flex-end;justify-content:center;padding-bottom:3.5px;padding-right:3px;"><span style="font-size:11px;line-height:1;white-space:nowrap;color:#000;">Rp0</span></div>
<div class="a" style="left:776px;top:610px;width:86px;height:18px;background:#ffff00;overflow:hidden;display:flex;align-items:flex-end;justify-content:center;padding-bottom:3.5px;padding-right:3px;"><span style="font-size:11px;line-height:1;white-space:nowrap;color:#000;">Rp0</span></div>
<div class="a" style="left:865px;top:610px;width:83px;height:18px;background:#ffff00;overflow:hidden;display:flex;align-items:flex-end;justify-content:center;padding-bottom:3.5px;padding-right:3px;"><span style="font-size:11px;line-height:1;white-space:nowrap;color:#000;">Rp0</span></div>
<div class="a" style="left:952px;top:610px;width:81px;height:18px;background:#ffff00;overflow:hidden;display:flex;align-items:flex-end;justify-content:center;padding-bottom:3.5px;padding-right:3px;"><span style="font-size:11px;line-height:1;white-space:nowrap;color:#000;">Rp0</span></div>
<div class="a" style="left:1060px;top:610px;width:92px;height:18px;background:#ffff00;overflow:hidden;display:flex;align-items:flex-end;justify-content:center;padding-bottom:3.5px;padding-right:3px;"><span style="font-size:11px;line-height:1;white-space:nowrap;color:#000;">Rp0</span></div>
<div class="a" style="left:1182px;top:610px;width:94px;height:18px;background:#ffff00;overflow:hidden;display:flex;align-items:flex-end;justify-content:center;padding-bottom:3.5px;padding-right:3px;"><span style="font-size:11px;line-height:1;white-space:nowrap;color:#000;">Rp0</span></div>
<div class="a" style="left:1309px;top:610px;width:66px;height:18px;background:#ffff00;overflow:hidden;display:flex;align-items:flex-end;justify-content:center;padding-bottom:3.5px;padding-right:3px;"><span style="font-size:11px;line-height:1;white-space:nowrap;color:#000;">Rp0</span></div>
<div class="a" style="left:1377px;top:610px;width:67px;height:18px;background:#ffff00;overflow:hidden;display:flex;align-items:flex-end;justify-content:center;padding-bottom:3.5px;padding-right:3px;"><span style="font-size:11px;line-height:1;white-space:nowrap;color:#000;">Rp0</span></div>
<div class="a" style="left:34px;top:629px;width:45px;height:18px;background:#ffff00;overflow:hidden;display:flex;align-items:flex-end;justify-content:center;padding-bottom:3.5px;padding-left:2.5px;"><span style="font-size:11px;line-height:1;white-space:nowrap;color:#000;">30</span></div>
<div class="a" style="left:85px;top:629px;width:65px;height:18px;background:#92d050;overflow:hidden;display:flex;align-items:flex-end;justify-content:center;padding-bottom:3.5px;"><span style="font-size:11px;line-height:1;white-space:nowrap;color:#000;">DP</span></div>
<div class="a" style="left:153px;top:629px;width:65px;height:18px;background:#fdf0d5;overflow:hidden;display:flex;align-items:flex-end;justify-content:flex-start;padding-left:3px;padding-bottom:3.5px;"><span style="font-size:11px;line-height:1;white-space:nowrap;color:#000;">UGDEWA</span></div>
<div class="a" style="left:221px;top:629px;width:95px;height:18px;background:#ffff00;overflow:hidden;display:flex;align-items:flex-end;justify-content:flex-start;padding-left:3px;padding-bottom:3.5px;"><span style="font-size:11px;line-height:1;white-space:nowrap;color:#000;letter-spacing:0.4px;">Ugodewa|FORM</span></div>
<div class="a" style="left:318px;top:629px;width:236px;height:18px;background:#ffff00;overflow:hidden;display:flex;align-items:flex-end;justify-content:flex-start;padding-left:4px;padding-bottom:3.5px;"><span style="font-size:11px;line-height:1;white-space:nowrap;color:#000;letter-spacing:0.45px;">Ahmad mulyadi / MANDIRI</span></div>
<div class="a" style="left:566px;top:629px;width:99px;height:18px;background:#ffff00;overflow:hidden;display:flex;align-items:flex-end;justify-content:center;padding-bottom:3.5px;padding-right:3px;"><span style="font-size:11px;line-height:1;white-space:nowrap;color:#000;">Rp0</span></div>
<div class="a" style="left:668px;top:629px;width:99px;height:18px;background:#ffff00;overflow:hidden;display:flex;align-items:flex-end;justify-content:center;padding-bottom:3.5px;padding-right:3px;"><span style="font-size:11px;line-height:1;white-space:nowrap;color:#000;">Rp0</span></div>
<div class="a" style="left:776px;top:629px;width:86px;height:18px;background:#ffff00;overflow:hidden;display:flex;align-items:flex-end;justify-content:center;padding-bottom:3.5px;padding-right:3px;"><span style="font-size:11px;line-height:1;white-space:nowrap;color:#000;">Rp0</span></div>
<div class="a" style="left:865px;top:629px;width:83px;height:18px;background:#ffff00;overflow:hidden;display:flex;align-items:flex-end;justify-content:center;padding-bottom:3.5px;padding-right:3px;"><span style="font-size:11px;line-height:1;white-space:nowrap;color:#000;">Rp0</span></div>
<div class="a" style="left:952px;top:629px;width:81px;height:18px;background:#ffff00;overflow:hidden;display:flex;align-items:flex-end;justify-content:center;padding-bottom:3.5px;padding-right:3px;"><span style="font-size:11px;line-height:1;white-space:nowrap;color:#000;">Rp0</span></div>
<div class="a" style="left:1060px;top:629px;width:92px;height:18px;background:#ffff00;overflow:hidden;display:flex;align-items:flex-end;justify-content:center;padding-bottom:3.5px;padding-right:3px;"><span style="font-size:11px;line-height:1;white-space:nowrap;color:#000;">Rp100,000</span></div>
<div class="a" style="left:1182px;top:629px;width:94px;height:18px;background:#ffff00;overflow:hidden;display:flex;align-items:flex-end;justify-content:center;padding-bottom:3.5px;padding-right:3px;"><span style="font-size:11px;line-height:1;white-space:nowrap;color:#000;">Rp0</span></div>
<div class="a" style="left:1309px;top:629px;width:66px;height:18px;background:#ffff00;overflow:hidden;display:flex;align-items:flex-end;justify-content:center;padding-bottom:3.5px;padding-right:3px;"><span style="font-size:11px;line-height:1;white-space:nowrap;color:#000;">Rp0</span></div>
<div class="a" style="left:1377px;top:629px;width:67px;height:18px;background:#ffff00;overflow:hidden;display:flex;align-items:flex-end;justify-content:center;padding-bottom:3.5px;padding-right:3px;"><span style="font-size:11px;line-height:1;white-space:nowrap;color:#000;">Rp0</span></div>
<div class="a" style="left:34px;top:648px;width:45px;height:18px;background:#ffff00;overflow:hidden;display:flex;align-items:flex-end;justify-content:center;padding-bottom:3.5px;padding-left:2.5px;"><span style="font-size:11px;line-height:1;white-space:nowrap;color:#000;">31</span></div>
<div class="a" style="left:85px;top:648px;width:65px;height:18px;background:#92d050;overflow:hidden;display:flex;align-items:flex-end;justify-content:center;padding-bottom:3.5px;"><span style="font-size:11px;line-height:1;white-space:nowrap;color:#000;">DP</span></div>
<div class="a" style="left:153px;top:648px;width:65px;height:18px;background:#fdf0d5;overflow:hidden;display:flex;align-items:flex-end;justify-content:flex-start;padding-left:3px;padding-bottom:3.5px;"><span style="font-size:11px;line-height:1;white-space:nowrap;color:#000;">UGDEWA</span></div>
<div class="a" style="left:221px;top:648px;width:95px;height:18px;background:#ffff00;overflow:hidden;display:flex;align-items:flex-end;justify-content:flex-start;padding-left:3px;padding-bottom:3.5px;"><span style="font-size:11px;line-height:1;white-space:nowrap;color:#000;letter-spacing:0.4px;">Rinaka|FORM DA</span></div>
<div class="a" style="left:318px;top:648px;width:236px;height:18px;background:#ffff00;overflow:hidden;display:flex;align-items:flex-end;justify-content:flex-start;padding-left:4px;padding-bottom:3.5px;"><span style="font-size:11px;line-height:1;white-space:nowrap;color:#000;letter-spacing:0.45px;">CANDA RINAKA / MANDIRI</span></div>
<div class="a" style="left:566px;top:648px;width:99px;height:18px;background:#ffff00;overflow:hidden;display:flex;align-items:flex-end;justify-content:center;padding-bottom:3.5px;padding-right:3px;"><span style="font-size:11px;line-height:1;white-space:nowrap;color:#000;">Rp0</span></div>
<div class="a" style="left:668px;top:648px;width:99px;height:18px;background:#ffff00;overflow:hidden;display:flex;align-items:flex-end;justify-content:center;padding-bottom:3.5px;padding-right:3px;"><span style="font-size:11px;line-height:1;white-space:nowrap;color:#000;">Rp0</span></div>
<div class="a" style="left:776px;top:648px;width:86px;height:18px;background:#ffff00;overflow:hidden;display:flex;align-items:flex-end;justify-content:center;padding-bottom:3.5px;padding-right:3px;"><span style="font-size:11px;line-height:1;white-space:nowrap;color:#000;">Rp0</span></div>
<div class="a" style="left:865px;top:648px;width:83px;height:18px;background:#ffff00;overflow:hidden;display:flex;align-items:flex-end;justify-content:center;padding-bottom:3.5px;padding-right:3px;"><span style="font-size:11px;line-height:1;white-space:nowrap;color:#000;">Rp0</span></div>
<div class="a" style="left:952px;top:648px;width:81px;height:18px;background:#ffff00;overflow:hidden;display:flex;align-items:flex-end;justify-content:center;padding-bottom:3.5px;padding-right:3px;"><span style="font-size:11px;line-height:1;white-space:nowrap;color:#000;">Rp0</span></div>
<div class="a" style="left:1060px;top:648px;width:92px;height:18px;background:#ffff00;overflow:hidden;display:flex;align-items:flex-end;justify-content:center;padding-bottom:3.5px;padding-right:3px;"><span style="font-size:11px;line-height:1;white-space:nowrap;color:#000;">Rp50,000</span></div>
<div class="a" style="left:1182px;top:648px;width:94px;height:18px;background:#ffff00;overflow:hidden;display:flex;align-items:flex-end;justify-content:center;padding-bottom:3.5px;padding-right:3px;"><span style="font-size:11px;line-height:1;white-space:nowrap;color:#000;">Rp0</span></div>
<div class="a" style="left:1309px;top:648px;width:66px;height:18px;background:#ffff00;overflow:hidden;display:flex;align-items:flex-end;justify-content:center;padding-bottom:3.5px;padding-right:3px;"><span style="font-size:11px;line-height:1;white-space:nowrap;color:#000;">Rp0</span></div>
<div class="a" style="left:1377px;top:648px;width:67px;height:18px;background:#ffff00;overflow:hidden;display:flex;align-items:flex-end;justify-content:center;padding-bottom:3.5px;padding-right:3px;"><span style="font-size:11px;line-height:1;white-space:nowrap;color:#000;">Rp0</span></div>
<div class="a" style="left:34px;top:667px;width:45px;height:18px;background:#ffff00;overflow:hidden;display:flex;align-items:flex-end;justify-content:center;padding-bottom:3.5px;padding-left:2.5px;"><span style="font-size:11px;line-height:1;white-space:nowrap;color:#000;">32</span></div>
<div class="a" style="left:85px;top:667px;width:65px;height:18px;background:#92d050;overflow:hidden;display:flex;align-items:flex-end;justify-content:center;padding-bottom:3.5px;"><span style="font-size:11px;line-height:1;white-space:nowrap;color:#000;">DP</span></div>
<div class="a" style="left:153px;top:667px;width:65px;height:18px;background:#fdf0d5;overflow:hidden;display:flex;align-items:flex-end;justify-content:flex-start;padding-left:3px;padding-bottom:3.5px;"><span style="font-size:11px;line-height:1;white-space:nowrap;color:#000;">UGDEWA</span></div>
<div class="a" style="left:221px;top:667px;width:95px;height:18px;background:#ffff00;overflow:hidden;display:flex;align-items:flex-end;justify-content:flex-start;padding-left:3px;padding-bottom:3.5px;"><span style="font-size:11px;line-height:1;white-space:nowrap;color:#000;letter-spacing:0.4px;">Motor3|FORM D</span></div>
<div class="a" style="left:318px;top:667px;width:236px;height:18px;background:#ffff00;overflow:hidden;display:flex;align-items:flex-end;justify-content:flex-start;padding-left:4px;padding-bottom:3.5px;"><span style="font-size:11px;line-height:1;white-space:nowrap;color:#000;letter-spacing:0.45px;">Riyanto / MANDIRI</span></div>
<div class="a" style="left:566px;top:667px;width:99px;height:18px;background:#ffff00;overflow:hidden;display:flex;align-items:flex-end;justify-content:center;padding-bottom:3.5px;padding-right:3px;"><span style="font-size:11px;line-height:1;white-space:nowrap;color:#000;">Rp0</span></div>
<div class="a" style="left:668px;top:667px;width:99px;height:18px;background:#ffff00;overflow:hidden;display:flex;align-items:flex-end;justify-content:center;padding-bottom:3.5px;padding-right:3px;"><span style="font-size:11px;line-height:1;white-space:nowrap;color:#000;">Rp0</span></div>
<div class="a" style="left:776px;top:667px;width:86px;height:18px;background:#ffff00;overflow:hidden;display:flex;align-items:flex-end;justify-content:center;padding-bottom:3.5px;padding-right:3px;"><span style="font-size:11px;line-height:1;white-space:nowrap;color:#000;">Rp0</span></div>
<div class="a" style="left:865px;top:667px;width:83px;height:18px;background:#ffff00;overflow:hidden;display:flex;align-items:flex-end;justify-content:center;padding-bottom:3.5px;padding-right:3px;"><span style="font-size:11px;line-height:1;white-space:nowrap;color:#000;">Rp0</span></div>
<div class="a" style="left:952px;top:667px;width:81px;height:18px;background:#ffff00;overflow:hidden;display:flex;align-items:flex-end;justify-content:center;padding-bottom:3.5px;padding-right:3px;"><span style="font-size:11px;line-height:1;white-space:nowrap;color:#000;">Rp0</span></div>
<div class="a" style="left:1060px;top:667px;width:92px;height:18px;background:#ffff00;overflow:hidden;display:flex;align-items:flex-end;justify-content:center;padding-bottom:3.5px;padding-right:3px;"><span style="font-size:11px;line-height:1;white-space:nowrap;color:#000;">Rp20,000</span></div>
<div class="a" style="left:1182px;top:667px;width:94px;height:18px;background:#ffff00;overflow:hidden;display:flex;align-items:flex-end;justify-content:center;padding-bottom:3.5px;padding-right:3px;"><span style="font-size:11px;line-height:1;white-space:nowrap;color:#000;">Rp0</span></div>
<div class="a" style="left:1309px;top:667px;width:66px;height:18px;background:#ffff00;overflow:hidden;display:flex;align-items:flex-end;justify-content:center;padding-bottom:3.5px;padding-right:3px;"><span style="font-size:11px;line-height:1;white-space:nowrap;color:#000;">Rp0</span></div>
<div class="a" style="left:1377px;top:667px;width:67px;height:18px;background:#ffff00;overflow:hidden;display:flex;align-items:flex-end;justify-content:center;padding-bottom:3.5px;padding-right:3px;"><span style="font-size:11px;line-height:1;white-space:nowrap;color:#000;">Rp0</span></div>
<div class="a" style="left:34px;top:686px;width:45px;height:18px;background:#ffffff;overflow:hidden;display:flex;align-items:flex-end;justify-content:center;padding-bottom:3.5px;padding-left:2.5px;"><span style="font-size:11px;line-height:1;white-space:nowrap;color:#000;">33</span></div>
<div class="a" style="left:85px;top:686px;width:65px;height:18px;background:#92d050;overflow:hidden;display:flex;align-items:flex-end;justify-content:center;padding-bottom:3.5px;"><span style="font-size:11px;line-height:1;white-space:nowrap;color:#000;">DP</span></div>
<div class="a" style="left:153px;top:686px;width:65px;height:18px;background:#fdf0d5;overflow:hidden;display:flex;align-items:flex-end;justify-content:flex-start;padding-left:3px;padding-bottom:3.5px;"><span style="font-size:11px;line-height:1;white-space:nowrap;color:#000;">UGDEWA</span></div>
<div class="a" style="left:221px;top:686px;width:95px;height:18px;background:#ffffff;overflow:hidden;display:flex;align-items:flex-end;justify-content:flex-start;padding-left:3px;padding-bottom:3.5px;"><span style="font-size:11px;line-height:1;white-space:nowrap;color:#000;letter-spacing:0.4px;">Kentruk</span></div>
<div class="a" style="left:318px;top:686px;width:236px;height:18px;background:#ffffff;overflow:hidden;display:flex;align-items:flex-end;justify-content:flex-start;padding-left:4px;padding-bottom:3.5px;"><span style="font-size:11px;line-height:1;white-space:nowrap;color:#000;letter-spacing:0.45px;">riyadi</span></div>
<div class="a" style="left:566px;top:686px;width:99px;height:18px;background:#558ed5;overflow:hidden;display:flex;align-items:flex-end;justify-content:center;padding-bottom:3.5px;padding-right:3px;"><span style="font-size:11px;line-height:1;white-space:nowrap;color:#000;">Rp0</span></div>
<div class="a" style="left:668px;top:686px;width:99px;height:18px;background:#558ed5;overflow:hidden;display:flex;align-items:flex-end;justify-content:center;padding-bottom:3.5px;padding-right:3px;"><span style="font-size:11px;line-height:1;white-space:nowrap;color:#000;">Rp0</span></div>
<div class="a" style="left:776px;top:686px;width:86px;height:18px;background:#558ed5;overflow:hidden;display:flex;align-items:flex-end;justify-content:center;padding-bottom:3.5px;padding-right:3px;"><span style="font-size:11px;line-height:1;white-space:nowrap;color:#000;">Rp0</span></div>
<div class="a" style="left:865px;top:686px;width:83px;height:18px;background:#558ed5;overflow:hidden;display:flex;align-items:flex-end;justify-content:center;padding-bottom:3.5px;padding-right:3px;"><span style="font-size:11px;line-height:1;white-space:nowrap;color:#000;">Rp0</span></div>
<div class="a" style="left:952px;top:686px;width:81px;height:18px;background:#558ed5;overflow:hidden;display:flex;align-items:flex-end;justify-content:center;padding-bottom:3.5px;padding-right:3px;"><span style="font-size:11px;line-height:1;white-space:nowrap;color:#000;">Rp0</span></div>
<div class="a" style="left:1060px;top:686px;width:92px;height:18px;background:#c6d9f1;overflow:hidden;display:flex;align-items:flex-end;justify-content:center;padding-bottom:3.5px;padding-right:3px;"><span style="font-size:11px;line-height:1;white-space:nowrap;color:#000;">Rp100,000</span></div>
<div class="a" style="left:1182px;top:686px;width:94px;height:18px;background:#ffc000;overflow:hidden;display:flex;align-items:flex-end;justify-content:center;padding-bottom:3.5px;padding-right:3px;"><span style="font-size:11px;line-height:1;white-space:nowrap;color:#000;">Rp0</span></div>
<div class="a" style="left:1309px;top:686px;width:66px;height:18px;background:#fde9d9;overflow:hidden;display:flex;align-items:flex-end;justify-content:center;padding-bottom:3.5px;padding-right:3px;"><span style="font-size:11px;line-height:1;white-space:nowrap;color:#000;">Rp0</span></div>
<div class="a" style="left:1377px;top:686px;width:67px;height:18px;background:#fde9d9;overflow:hidden;display:flex;align-items:flex-end;justify-content:center;padding-bottom:3.5px;padding-right:3px;"><span style="font-size:11px;line-height:1;white-space:nowrap;color:#000;">Rp0</span></div>
<div class="a" style="left:34px;top:705px;width:45px;height:18px;background:#ffffff;overflow:hidden;display:flex;align-items:flex-end;justify-content:center;padding-bottom:3.5px;padding-left:2.5px;"><span style="font-size:11px;line-height:1;white-space:nowrap;color:#000;">34</span></div>
<div class="a" style="left:85px;top:705px;width:65px;height:18px;background:#92d050;overflow:hidden;display:flex;align-items:flex-end;justify-content:center;padding-bottom:3.5px;"><span style="font-size:11px;line-height:1;white-space:nowrap;color:#000;">DP</span></div>
<div class="a" style="left:153px;top:705px;width:65px;height:18px;background:#fdf0d5;overflow:hidden;display:flex;align-items:flex-end;justify-content:flex-start;padding-left:3px;padding-bottom:3.5px;"><span style="font-size:11px;line-height:1;white-space:nowrap;color:#000;">UGDEWA</span></div>
<div class="a" style="left:221px;top:705px;width:95px;height:18px;background:#ffffff;overflow:hidden;display:flex;align-items:flex-end;justify-content:flex-start;padding-left:3px;padding-bottom:3.5px;"><span style="font-size:11px;line-height:1;white-space:nowrap;color:#000;letter-spacing:0.4px;">Manz77</span></div>
<div class="a" style="left:318px;top:705px;width:236px;height:18px;background:#ffffff;overflow:hidden;display:flex;align-items:flex-end;justify-content:flex-start;padding-left:4px;padding-bottom:3.5px;"><span style="font-size:11px;line-height:1;white-space:nowrap;color:#000;letter-spacing:0.45px;">Hermansyah putra basri / MANDIRI</span></div>
<div class="a" style="left:566px;top:705px;width:99px;height:18px;background:#558ed5;overflow:hidden;display:flex;align-items:flex-end;justify-content:center;padding-bottom:3.5px;padding-right:3px;"><span style="font-size:11px;line-height:1;white-space:nowrap;color:#000;">Rp0</span></div>
<div class="a" style="left:668px;top:705px;width:99px;height:18px;background:#558ed5;overflow:hidden;display:flex;align-items:flex-end;justify-content:center;padding-bottom:3.5px;padding-right:3px;"><span style="font-size:11px;line-height:1;white-space:nowrap;color:#000;">Rp0</span></div>
<div class="a" style="left:776px;top:705px;width:86px;height:18px;background:#558ed5;overflow:hidden;display:flex;align-items:flex-end;justify-content:center;padding-bottom:3.5px;padding-right:3px;"><span style="font-size:11px;line-height:1;white-space:nowrap;color:#000;">Rp0</span></div>
<div class="a" style="left:865px;top:705px;width:83px;height:18px;background:#558ed5;overflow:hidden;display:flex;align-items:flex-end;justify-content:center;padding-bottom:3.5px;padding-right:3px;"><span style="font-size:11px;line-height:1;white-space:nowrap;color:#000;">Rp0</span></div>
<div class="a" style="left:952px;top:705px;width:81px;height:18px;background:#558ed5;overflow:hidden;display:flex;align-items:flex-end;justify-content:center;padding-bottom:3.5px;padding-right:3px;"><span style="font-size:11px;line-height:1;white-space:nowrap;color:#000;">Rp0</span></div>
<div class="a" style="left:1060px;top:705px;width:92px;height:18px;background:#c6d9f1;overflow:hidden;display:flex;align-items:flex-end;justify-content:center;padding-bottom:3.5px;padding-right:3px;"><span style="font-size:11px;line-height:1;white-space:nowrap;color:#000;">Rp500,000</span></div>
<div class="a" style="left:1182px;top:705px;width:94px;height:18px;background:#ffc000;overflow:hidden;display:flex;align-items:flex-end;justify-content:center;padding-bottom:3.5px;padding-right:3px;"><span style="font-size:11px;line-height:1;white-space:nowrap;color:#000;">Rp0</span></div>
<div class="a" style="left:1309px;top:705px;width:66px;height:18px;background:#fde9d9;overflow:hidden;display:flex;align-items:flex-end;justify-content:center;padding-bottom:3.5px;padding-right:3px;"><span style="font-size:11px;line-height:1;white-space:nowrap;color:#000;">Rp0</span></div>
<div class="a" style="left:1377px;top:705px;width:67px;height:18px;background:#fde9d9;overflow:hidden;display:flex;align-items:flex-end;justify-content:center;padding-bottom:3.5px;padding-right:3px;"><span style="font-size:11px;line-height:1;white-space:nowrap;color:#000;">Rp0</span></div>
<div class="a" style="left:34px;top:724px;width:45px;height:18px;background:#ffffff;overflow:hidden;display:flex;align-items:flex-end;justify-content:center;padding-bottom:3.5px;padding-left:2.5px;"><span style="font-size:11px;line-height:1;white-space:nowrap;color:#000;">35</span></div>
<div class="a" style="left:85px;top:724px;width:65px;height:18px;background:#92d050;overflow:hidden;display:flex;align-items:flex-end;justify-content:center;padding-bottom:3.5px;"><span style="font-size:11px;line-height:1;white-space:nowrap;color:#000;">DP</span></div>
<div class="a" style="left:153px;top:724px;width:65px;height:18px;background:#fdf0d5;overflow:hidden;display:flex;align-items:flex-end;justify-content:flex-start;padding-left:3px;padding-bottom:3.5px;"><span style="font-size:11px;line-height:1;white-space:nowrap;color:#000;">UGDEWA</span></div>
<div class="a" style="left:221px;top:724px;width:95px;height:18px;background:#ffffff;overflow:hidden;display:flex;align-items:flex-end;justify-content:flex-start;padding-left:3px;padding-bottom:3.5px;"><span style="font-size:11px;line-height:1;white-space:nowrap;color:#000;letter-spacing:0.4px;">Renyyulia77</span></div>
<div class="a" style="left:318px;top:724px;width:236px;height:18px;background:#ffffff;overflow:hidden;display:flex;align-items:flex-end;justify-content:flex-start;padding-left:4px;padding-bottom:3.5px;"><span style="font-size:11px;line-height:1;white-space:nowrap;color:#000;letter-spacing:0.45px;">visionet</span></div>
<div class="a" style="left:566px;top:724px;width:99px;height:18px;background:#558ed5;overflow:hidden;display:flex;align-items:flex-end;justify-content:center;padding-bottom:3.5px;padding-right:3px;"><span style="font-size:11px;line-height:1;white-space:nowrap;color:#000;">Rp0</span></div>
<div class="a" style="left:668px;top:724px;width:99px;height:18px;background:#558ed5;overflow:hidden;display:flex;align-items:flex-end;justify-content:center;padding-bottom:3.5px;padding-right:3px;"><span style="font-size:11px;line-height:1;white-space:nowrap;color:#000;">Rp0</span></div>
<div class="a" style="left:776px;top:724px;width:86px;height:18px;background:#558ed5;overflow:hidden;display:flex;align-items:flex-end;justify-content:center;padding-bottom:3.5px;padding-right:3px;"><span style="font-size:11px;line-height:1;white-space:nowrap;color:#000;">Rp0</span></div>
<div class="a" style="left:865px;top:724px;width:83px;height:18px;background:#558ed5;overflow:hidden;display:flex;align-items:flex-end;justify-content:center;padding-bottom:3.5px;padding-right:3px;"><span style="font-size:11px;line-height:1;white-space:nowrap;color:#000;">Rp0</span></div>
<div class="a" style="left:952px;top:724px;width:81px;height:18px;background:#558ed5;overflow:hidden;display:flex;align-items:flex-end;justify-content:center;padding-bottom:3.5px;padding-right:3px;"><span style="font-size:11px;line-height:1;white-space:nowrap;color:#000;">Rp0</span></div>
<div class="a" style="left:1060px;top:724px;width:92px;height:18px;background:#c6d9f1;overflow:hidden;display:flex;align-items:flex-end;justify-content:center;padding-bottom:3.5px;padding-right:3px;"><span style="font-size:11px;line-height:1;white-space:nowrap;color:#000;">Rp95,000</span></div>
<div class="a" style="left:1182px;top:724px;width:94px;height:18px;background:#ffc000;overflow:hidden;display:flex;align-items:flex-end;justify-content:center;padding-bottom:3.5px;padding-right:3px;"><span style="font-size:11px;line-height:1;white-space:nowrap;color:#000;">Rp0</span></div>
<div class="a" style="left:1309px;top:724px;width:66px;height:18px;background:#fde9d9;overflow:hidden;display:flex;align-items:flex-end;justify-content:center;padding-bottom:3.5px;padding-right:3px;"><span style="font-size:11px;line-height:1;white-space:nowrap;color:#000;">Rp0</span></div>
<div class="a" style="left:1377px;top:724px;width:67px;height:18px;background:#fde9d9;overflow:hidden;display:flex;align-items:flex-end;justify-content:center;padding-bottom:3.5px;padding-right:3px;"><span style="font-size:11px;line-height:1;white-space:nowrap;color:#000;">Rp0</span></div>
<div class="a" style="left:34px;top:743px;width:45px;height:18px;background:#ffffff;overflow:hidden;display:flex;align-items:flex-end;justify-content:center;padding-bottom:3.5px;padding-left:2.5px;"><span style="font-size:11px;line-height:1;white-space:nowrap;color:#000;">36</span></div>
<div class="a" style="left:85px;top:743px;width:65px;height:18px;background:#92d050;overflow:hidden;display:flex;align-items:flex-end;justify-content:center;padding-bottom:3.5px;"><span style="font-size:11px;line-height:1;white-space:nowrap;color:#000;">DP</span></div>
<div class="a" style="left:153px;top:743px;width:65px;height:18px;background:#fdf0d5;overflow:hidden;display:flex;align-items:flex-end;justify-content:flex-start;padding-left:3px;padding-bottom:3.5px;"><span style="font-size:11px;line-height:1;white-space:nowrap;color:#000;">UGDEWA</span></div>
<div class="a" style="left:221px;top:743px;width:95px;height:18px;background:#ffffff;overflow:hidden;display:flex;align-items:flex-end;justify-content:flex-start;padding-left:3px;padding-bottom:3.5px;"><span style="font-size:11px;line-height:1;white-space:nowrap;color:#000;letter-spacing:0.4px;">rakudwdhas</span></div>
<div class="a" style="left:318px;top:743px;width:236px;height:18px;background:#ffffff;overflow:hidden;display:flex;align-items:flex-end;justify-content:flex-start;padding-left:4px;padding-bottom:3.5px;"><span style="font-size:11px;line-height:1;white-space:nowrap;color:#000;letter-spacing:0.45px;">ade yudha erlangga / MANDIRI</span></div>
<div class="a" style="left:566px;top:743px;width:99px;height:18px;background:#558ed5;overflow:hidden;display:flex;align-items:flex-end;justify-content:center;padding-bottom:3.5px;padding-right:3px;"><span style="font-size:11px;line-height:1;white-space:nowrap;color:#000;">Rp0</span></div>
<div class="a" style="left:668px;top:743px;width:99px;height:18px;background:#558ed5;overflow:hidden;display:flex;align-items:flex-end;justify-content:center;padding-bottom:3.5px;padding-right:3px;"><span style="font-size:11px;line-height:1;white-space:nowrap;color:#000;">Rp0</span></div>
<div class="a" style="left:776px;top:743px;width:86px;height:18px;background:#558ed5;overflow:hidden;display:flex;align-items:flex-end;justify-content:center;padding-bottom:3.5px;padding-right:3px;"><span style="font-size:11px;line-height:1;white-space:nowrap;color:#000;">Rp0</span></div>
<div class="a" style="left:865px;top:743px;width:83px;height:18px;background:#558ed5;overflow:hidden;display:flex;align-items:flex-end;justify-content:center;padding-bottom:3.5px;padding-right:3px;"><span style="font-size:11px;line-height:1;white-space:nowrap;color:#000;">Rp0</span></div>
<div class="a" style="left:952px;top:743px;width:81px;height:18px;background:#558ed5;overflow:hidden;display:flex;align-items:flex-end;justify-content:center;padding-bottom:3.5px;padding-right:3px;"><span style="font-size:11px;line-height:1;white-space:nowrap;color:#000;">Rp0</span></div>
<div class="a" style="left:1060px;top:743px;width:92px;height:18px;background:#c6d9f1;overflow:hidden;display:flex;align-items:flex-end;justify-content:center;padding-bottom:3.5px;padding-right:3px;"><span style="font-size:11px;line-height:1;white-space:nowrap;color:#000;">Rp50,000</span></div>
<div class="a" style="left:1182px;top:743px;width:94px;height:18px;background:#ffc000;overflow:hidden;display:flex;align-items:flex-end;justify-content:center;padding-bottom:3.5px;padding-right:3px;"><span style="font-size:11px;line-height:1;white-space:nowrap;color:#000;">Rp0</span></div>
<div class="a" style="left:1309px;top:743px;width:66px;height:18px;background:#fde9d9;overflow:hidden;display:flex;align-items:flex-end;justify-content:center;padding-bottom:3.5px;padding-right:3px;"><span style="font-size:11px;line-height:1;white-space:nowrap;color:#000;">Rp0</span></div>
<div class="a" style="left:1377px;top:743px;width:67px;height:18px;background:#fde9d9;overflow:hidden;display:flex;align-items:flex-end;justify-content:center;padding-bottom:3.5px;padding-right:3px;"><span style="font-size:11px;line-height:1;white-space:nowrap;color:#000;">Rp0</span></div>
<div class="a" style="left:33px;top:343px;width:1380px;height:19px;background:rgba(14,101,235,0.1)"></div>
<div class="a" style="left:33px;top:343px;width:1380px;height:1px;background:#1a73e8"></div>
<div class="a" style="left:33px;top:362px;width:1380px;height:1px;background:#1a73e8"></div>
<div class="a" style="left:220px;top:343px;width:98px;height:20px;border:1.5px solid #1a73e8"></div>
<div class="a" style="left:39.5px;top:334.3px;width:827.5px;height:40.2px;border:3px solid #ff1010;border-radius:2px"></div>
</div>
<div class="a" style="left:1413px;top:135px;width:7px;height:616px;background:#f8f8f8;border-left:1px solid #e4e4e4"></div>
<div class="a" style="left:1413px;top:135px;width:7px;height:21px;background:#fff;border-left:1px solid #e4e4e4"></div>
<div class="a" style="left:1413px;top:156px;width:7px;height:4px;background:#dcdcdc"></div>
<div class="a" style="left:1414px;top:267px;width:6px;height:21px;background:#dadce0;border-radius:3px 0 0 3px"></div>
<div class="a" style="left:0;top:751px;width:1420px;height:12px;background:#f8f8f8;border-top:1px solid #e8e8e8"></div>
<div class="a" style="left:32px;top:751px;width:1px;height:12px;background:#e0e0e0"></div>
<div class="a" style="left:34px;top:753px;width:1131px;height:8px;background:#dadce0;border-radius:4px"></div>
<div class="a" style="left:0;top:763px;width:1420px;height:1px;background:#e6e6e6"></div>
<div class="a" style="left:0;top:764px;width:1420px;height:32px;background:#f9fbfd"></div>
<div class="a" style="left:0;top:796px;width:1420px;height:1px;background:#c0c0c0"></div>
<div class="a" style="left:393px;top:764px;width:44px;height:32px;background:#e1e9f7"></div>
<div class="t" style="left:143.5px;top:775px;font-size:12.6px;color:#444746;letter-spacing:0.1px;-webkit-text-stroke:0.25px #444746">STATISTIK</div>
<div class="t" style="left:247px;top:775px;font-size:12.6px;color:#444746;letter-spacing:0.1px;-webkit-text-stroke:0.25px #444746">TRF</div>
<div class="t" style="left:329.5px;top:775px;font-size:12.6px;color:#444746;letter-spacing:0.1px;-webkit-text-stroke:0.25px #444746">BANK</div>
<div class="t" style="left:449px;top:775px;font-size:12.6px;color:#444746;letter-spacing:0.1px;-webkit-text-stroke:0.25px #444746">A1</div>
<div class="t" style="left:502.5px;top:775px;font-size:12.6px;color:#444746;letter-spacing:0.1px;-webkit-text-stroke:0.25px #444746">P1</div>
<div class="t" style="left:575px;top:775px;font-size:12.6px;color:#444746;letter-spacing:0.1px;-webkit-text-stroke:0.25px #444746">MISTAKE</div>
<div class="t" style="left:403px;top:775px;font-size:12.6px;color:#0b57d0;-webkit-text-stroke:0.25px #0b57d0">1</div>
<div class="a" style="left:1171px;top:766.5px;width:146px;height:26px;background:#c4eed0;border-radius:6px"></div>
<div class="t" style="left:1180px;top:773px;font-size:13.4px;color:#1f1f1f;-webkit-text-stroke:0.2px #1f1f1f">Jumlah: Rp20,000</div>
<div class="a" style="left:1078px;top:107px;width:305px;height:62px;background:#fff;border:1px solid #dadce0;border-top:none;border-radius:0 0 6px 6px;box-shadow:0 1px 2px rgba(60,64,67,.25)"></div>
<div class="a" style="left:1090px;top:127px;width:153px;height:33px;border:1px solid #c7c7c7;border-radius:4px;background:#fff"></div>
<div class="t" style="left:1099px;top:137.5px;font-size:11.8px;letter-spacing:-0.25px;color:#1f1f1f">Wahyu</div>
<div class="t" style="left:1179px;top:137.5px;font-size:12.6px;color:#5f6368">2 dari 54</div>
<svg class="a" style="left:0;top:0" width="1420" height="797"><path d="M1258 143.5 l4.2 -4.2 l4.2 4.2" fill="none" stroke="#444746" stroke-width="1.5" stroke-linecap="butt" stroke-linejoin="miter"/><path d="M1288 139 l4.2 4.2 l4.2 -4.2" fill="none" stroke="#444746" stroke-width="1.5" stroke-linecap="butt" stroke-linejoin="miter"/><rect x="1316" y="130" width="1" height="22" fill="#c7c7c7"/><circle cx="1333.2" cy="137" r="1.5" fill="#444746"/><circle cx="1333.2" cy="141.3" r="1.5" fill="#444746"/><circle cx="1333.2" cy="145.6" r="1.5" fill="#444746"/><path d="M1357 138 l9 9 M1366 138 l-9 9" fill="none" stroke="#444746" stroke-width="1.5" stroke-linecap="butt" stroke-linejoin="miter"/><path d="M41.5 780.5 h10 M46.5 775.5 v10" fill="none" stroke="#444746" stroke-width="1.6" stroke-linecap="butt" stroke-linejoin="miter"/><path d="M77.5 777 h12.5 M77.5 780.5 h12.5 M77.5 784 h12.5" fill="none" stroke="#444746" stroke-width="1.5" stroke-linecap="butt" stroke-linejoin="miter"/><rect x="126.8" y="778.5" width="10.5" height="9" rx="1.2" fill="#444746"/><path d="M129.3 778.5 v-2 a2.75 2.75 0 0 1 5.5 0 v2" fill="none" stroke="#444746" stroke-width="1.5" stroke-linecap="butt" stroke-linejoin="miter"/><circle cx="132.05" cy="783" r="1.1" fill="#f9fbfd"/><rect x="313.0" y="778.5" width="10.5" height="9" rx="1.2" fill="#444746"/><path d="M315.5 778.5 v-2 a2.75 2.75 0 0 1 5.5 0 v2" fill="none" stroke="#444746" stroke-width="1.5" stroke-linecap="butt" stroke-linejoin="miter"/><circle cx="318.25" cy="783" r="1.1" fill="#f9fbfd"/><rect x="559.2" y="778.5" width="10.5" height="9" rx="1.2" fill="#444746"/><path d="M561.7 778.5 v-2 a2.75 2.75 0 0 1 5.5 0 v2" fill="none" stroke="#444746" stroke-width="1.5" stroke-linecap="butt" stroke-linejoin="miter"/><circle cx="564.45" cy="783" r="1.1" fill="#f9fbfd"/><path d="M215.8 779 h8.4 l-4.2 4.2z" fill="#444746"/><path d="M278.8 779 h8.4 l-4.2 4.2z" fill="#444746"/><path d="M374.3 779 h8.4 l-4.2 4.2z" fill="#444746"/><path d="M471.8 779 h8.4 l-4.2 4.2z" fill="#444746"/><path d="M525.3 779 h8.4 l-4.2 4.2z" fill="#444746"/><path d="M640.3 779 h8.4 l-4.2 4.2z" fill="#444746"/><path d="M418.3 779 h8.4 l-4.2 4.2z" fill="#0b57d0"/><path d="M1296.8 778 h8.4 l-4.2 4.2z" fill="#1f1f1f"/><path d="M1340.5 773 h12 a1 1 0 0 1 1 1 v10.5 h-4.5 l-2.5 2.5 l-2.5 -2.5 h-4.5 v-10.5 a1 1 0 0 1 1 -1z" fill="#5f6368"/><path d="M1347 774.5 q0.6 3.4 4 4 q-3.4 0.6 -4 4 q-0.6 -3.4 -4 -4 q3.4 -0.6 4 -4z" fill="#f9fbfd"/><path d="M1400.5 778 l-4.3 4.3 l4.3 4.3" fill="none" stroke="#444746" stroke-width="1.6" stroke-linecap="butt" stroke-linejoin="miter"/><path d="M1393.5 754.5 l-2.5 3 l2.5 3" fill="none" stroke="#9aa0a6" stroke-width="1" stroke-linecap="butt" stroke-linejoin="miter"/><path d="M1405 754.5 l2.5 3 l-2.5 3" fill="none" stroke="#9aa0a6" stroke-width="1" stroke-linecap="butt" stroke-linejoin="miter"/><path d="M1414.5 733 l2.5 -3 l2.5 3z" fill="#9aa0a6"/><path d="M1414.5 743 l2.5 3 l2.5 -3z" fill="#9aa0a6"/><rect x="1413" y="724" width="7" height="1" fill="#e0e0e0"/><rect x="1413" y="738" width="7" height="1" fill="#e0e0e0"/><rect x="1384" y="752" width="1" height="10" fill="#e0e0e0"/><rect x="1399" y="752" width="1" height="10" fill="#e0e0e0"/></svg>
</body></html>
